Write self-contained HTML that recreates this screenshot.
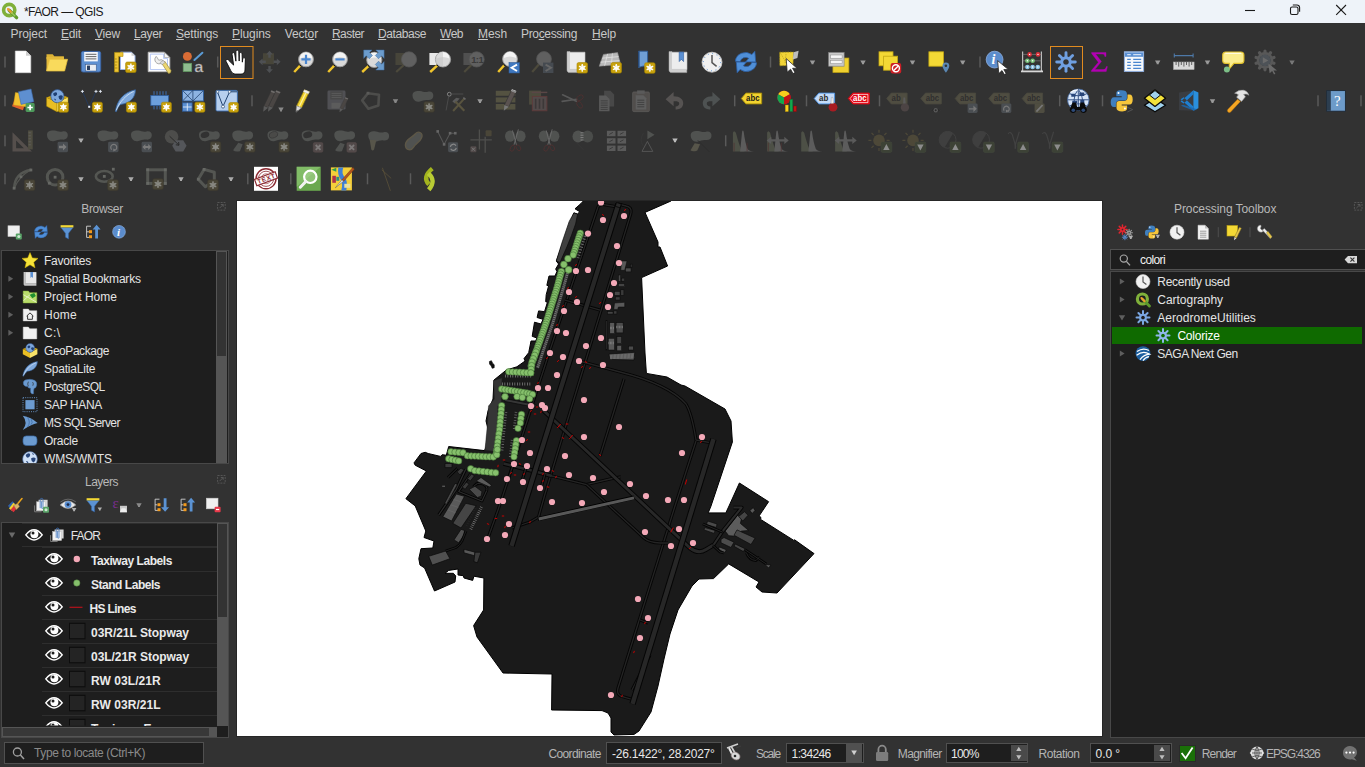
<!DOCTYPE html>
<html><head><meta charset="utf-8"><title>*FAOR — QGIS</title>
<style>
html,body{margin:0;padding:0;}
body{width:1365px;height:767px;overflow:hidden;position:relative;background:#323232;font-family:"Liberation Sans",sans-serif;font-size:12px;}
.t{position:absolute;white-space:pre;}
.b{position:absolute;box-sizing:border-box;}
svg{position:absolute;left:0;top:0;}
u{text-decoration:underline;text-underline-offset:1px;}
</style></head>
<body>
<div class="b" style="left:0px;top:0px;width:1365px;height:23px;background:#eef3f9;"></div>
<span class="t" style="left:24.0px;top:3.5px;font-size:12px;color:#1a1a1a;letter-spacing:-0.585px;line-height:16px;">*FAOR — QGIS</span>
<span class="t" style="left:10.5px;top:26px;font-size:12px;color:#c8c8c8;letter-spacing:-0.121px;line-height:16px;">Pro<u>j</u>ect</span>
<span class="t" style="left:61px;top:26px;font-size:12px;color:#c8c8c8;letter-spacing:-0.169px;line-height:16px;"><u>E</u>dit</span>
<span class="t" style="left:95px;top:26px;font-size:12px;color:#c8c8c8;letter-spacing:-0.198px;line-height:16px;"><u>V</u>iew</span>
<span class="t" style="left:134px;top:26px;font-size:12px;color:#c8c8c8;letter-spacing:-0.403px;line-height:16px;"><u>L</u>ayer</span>
<span class="t" style="left:176px;top:26px;font-size:12px;color:#c8c8c8;letter-spacing:-0.170px;line-height:16px;"><u>S</u>ettings</span>
<span class="t" style="left:232px;top:26px;font-size:12px;color:#c8c8c8;letter-spacing:-0.094px;line-height:16px;"><u>P</u>lugins</span>
<span class="t" style="left:284.7px;top:26px;font-size:12px;color:#c8c8c8;letter-spacing:-0.120px;line-height:16px;">Vect<u>o</u>r</span>
<span class="t" style="left:332px;top:26px;font-size:12px;color:#c8c8c8;letter-spacing:-0.557px;line-height:16px;"><u>R</u>aster</span>
<span class="t" style="left:378px;top:26px;font-size:12px;color:#c8c8c8;letter-spacing:-0.421px;line-height:16px;"><u>D</u>atabase</span>
<span class="t" style="left:440px;top:26px;font-size:12px;color:#c8c8c8;letter-spacing:-0.485px;line-height:16px;"><u>W</u>eb</span>
<span class="t" style="left:478px;top:26px;font-size:12px;color:#c8c8c8;letter-spacing:-0.085px;line-height:16px;"><u>M</u>esh</span>
<span class="t" style="left:521px;top:26px;font-size:12px;color:#c8c8c8;letter-spacing:-0.336px;line-height:16px;">Pro<u>c</u>essing</span>
<span class="t" style="left:592px;top:26px;font-size:12px;color:#c8c8c8;letter-spacing:-0.170px;line-height:16px;"><u>H</u>elp</span>
<div class="b" style="left:236px;top:200px;width:867px;height:537px;background:#262626;"></div>
<div class="b" style="left:237px;top:201px;width:865px;height:535px;background:#ffffff;"></div>
<span class="t" style="left:81.3px;top:200.5px;font-size:12px;color:#b8b8b8;letter-spacing:-0.358px;line-height:16px;">Browser</span>
<div class="b" style="left:1px;top:250px;width:227.5px;height:214px;background:#1e1e1e;border:1px solid #484848;"></div>
<div class="b" style="left:216px;top:251px;width:10.5px;height:212px;background:#555;"></div>
<div class="b" style="left:217px;top:252px;width:8.5px;height:104px;background:#333;"></div>
<span class="t" style="left:44.0px;top:252.5px;font-size:12px;color:#e4e4e4;letter-spacing:-0.260px;line-height:16px;">Favorites</span>
<span class="t" style="left:44.0px;top:270.5px;font-size:12px;color:#e4e4e4;letter-spacing:-0.191px;line-height:16px;">Spatial Bookmarks</span>
<span class="t" style="left:44.0px;top:288.5px;font-size:12px;color:#e4e4e4;letter-spacing:0.026px;line-height:16px;">Project Home</span>
<span class="t" style="left:44.0px;top:306.5px;font-size:12px;color:#e4e4e4;letter-spacing:0.248px;line-height:16px;">Home</span>
<span class="t" style="left:44.0px;top:324.5px;font-size:12px;color:#e4e4e4;letter-spacing:0.322px;line-height:16px;">C:\</span>
<span class="t" style="left:44.0px;top:342.5px;font-size:12px;color:#e4e4e4;letter-spacing:-0.448px;line-height:16px;">GeoPackage</span>
<span class="t" style="left:44.0px;top:360.5px;font-size:12px;color:#e4e4e4;letter-spacing:-0.207px;line-height:16px;">SpatiaLite</span>
<span class="t" style="left:44.0px;top:378.5px;font-size:12px;color:#e4e4e4;letter-spacing:-0.456px;line-height:16px;">PostgreSQL</span>
<span class="t" style="left:44.0px;top:396.5px;font-size:12px;color:#e4e4e4;letter-spacing:-0.309px;line-height:16px;">SAP HANA</span>
<span class="t" style="left:44.0px;top:414.5px;font-size:12px;color:#e4e4e4;letter-spacing:-0.598px;line-height:16px;">MS SQL Server</span>
<span class="t" style="left:44.0px;top:432.5px;font-size:12px;color:#e4e4e4;letter-spacing:-0.257px;line-height:16px;">Oracle</span>
<div class="b" style="left:2px;top:449px;width:213px;height:14px;overflow:hidden;">
<span class="t" style="left:42.0px;top:1.7px;font-size:12px;color:#e4e4e4;letter-spacing:-0.190px;line-height:16px;">WMS/WMTS</span>
</div>
<span class="t" style="left:85.0px;top:473.8px;font-size:12px;color:#b8b8b8;letter-spacing:-0.503px;line-height:16px;">Layers</span>
<div class="b" style="left:1px;top:522px;width:228px;height:216px;background:#1e1e1e;border:1px solid #484848;"></div>
<div class="b" style="left:217px;top:523px;width:10.5px;height:203px;background:#555;"></div>
<div class="b" style="left:218px;top:524px;width:8.5px;height:93px;background:#333;"></div>
<div class="b" style="left:2px;top:726.5px;width:215px;height:10px;background:#555;"></div>
<div class="b" style="left:3px;top:727.5px;width:206px;height:8px;background:#383838;"></div>
<div class="b" style="left:217px;top:726px;width:10.5px;height:11px;background:#1e1e1e;"></div>
<div class="b" style="left:22px;top:523px;width:195px;height:1px;background:#2e2e2e;"></div>
<div class="b" style="left:22px;top:546px;width:195px;height:1px;background:#2e2e2e;"></div>
<div class="b" style="left:42px;top:547px;width:175px;height:1px;background:#2e2e2e;"></div>
<div class="b" style="left:42px;top:570.6px;width:175px;height:1.4px;background:#2e2e2e;"></div>
<div class="b" style="left:42px;top:594.6px;width:175px;height:1.4px;background:#2e2e2e;"></div>
<div class="b" style="left:42px;top:618.6px;width:175px;height:1.4px;background:#2e2e2e;"></div>
<div class="b" style="left:42px;top:642.6px;width:175px;height:1.4px;background:#2e2e2e;"></div>
<div class="b" style="left:42px;top:666.6px;width:175px;height:1.4px;background:#2e2e2e;"></div>
<div class="b" style="left:42px;top:690.6px;width:175px;height:1.4px;background:#2e2e2e;"></div>
<div class="b" style="left:42px;top:714.6px;width:175px;height:1.4px;background:#2e2e2e;"></div>
<span class="t" style="left:70.8px;top:528.2px;font-size:12px;color:#e4e4e4;letter-spacing:-0.868px;line-height:16px;">FAOR</span>
<span class="t" style="left:91.0px;top:552.7px;font-size:12px;color:#eaeaea;letter-spacing:-0.446px;line-height:16px;font-weight:bold;">Taxiway Labels</span>
<span class="t" style="left:91.0px;top:576.7px;font-size:12px;color:#eaeaea;letter-spacing:-0.473px;line-height:16px;font-weight:bold;">Stand Labels</span>
<span class="t" style="left:89.4px;top:600.7px;font-size:12px;color:#eaeaea;letter-spacing:-0.605px;line-height:16px;font-weight:bold;">HS Lines</span>
<span class="t" style="left:91.0px;top:624.7px;font-size:12px;color:#eaeaea;letter-spacing:-0.032px;line-height:16px;font-weight:bold;">03R/21L Stopway</span>
<span class="t" style="left:91.0px;top:648.7px;font-size:12px;color:#eaeaea;letter-spacing:-0.046px;line-height:16px;font-weight:bold;">03L/21R Stopway</span>
<span class="t" style="left:91.0px;top:672.7px;font-size:12px;color:#eaeaea;letter-spacing:0.057px;line-height:16px;font-weight:bold;">RW 03L/21R</span>
<span class="t" style="left:91.0px;top:696.7px;font-size:12px;color:#eaeaea;letter-spacing:0.057px;line-height:16px;font-weight:bold;">RW 03R/21L</span>
<div class="b" style="left:2px;top:716px;width:215px;height:9.5px;overflow:hidden;">
<span class="t" style="left:89.0px;top:4.9px;font-size:12px;color:#eaeaea;letter-spacing:0.429px;line-height:16px;font-weight:bold;">Taxiway E</span>
</div>
<div class="b" style="left:0px;top:738px;width:1365px;height:29px;background:#323232;"></div>
<div class="b" style="left:4px;top:742px;width:200px;height:22px;background:#1e1e1e;border:1px solid #505050;"></div>
<span class="t" style="left:34.0px;top:745.3px;font-size:12px;color:#8a8a8a;letter-spacing:-0.379px;line-height:16px;">Type to locate (Ctrl+K)</span>
<span class="t" style="left:548.5px;top:745.5px;font-size:12px;color:#b4b4b4;letter-spacing:-0.640px;line-height:16px;">Coordinate</span>
<div class="b" style="left:606px;top:742px;width:116px;height:22px;background:#1e1e1e;border:1px solid #505050;"></div>
<span class="t" style="left:612.0px;top:745.5px;font-size:12px;color:#e8e8e8;letter-spacing:-0.232px;line-height:16px;">-26.1422°, 28.2027°</span>
<span class="t" style="left:756.0px;top:745.5px;font-size:12px;color:#b4b4b4;letter-spacing:-1.203px;line-height:16px;">Scale</span>
<div class="b" style="left:786px;top:742.5px;width:77.5px;height:20.5px;background:#1e1e1e;border:1px solid #505050;"></div>
<div class="b" style="left:846px;top:743.5px;width:16px;height:18.5px;background:#505050;"></div>
<span class="t" style="left:791.6px;top:745.5px;font-size:12px;color:#e8e8e8;letter-spacing:-0.625px;line-height:16px;">1:34246</span>
<span class="t" style="left:897.8px;top:745.5px;font-size:12px;color:#b4b4b4;letter-spacing:-0.617px;line-height:16px;">Magnifier</span>
<div class="b" style="left:946px;top:743px;width:82px;height:19.5px;background:#1e1e1e;border:1px solid #505050;"></div>
<div class="b" style="left:1011px;top:745px;width:16px;height:15.5px;background:#4a4a4a;"></div>
<span class="t" style="left:951.0px;top:745.5px;font-size:12px;color:#e8e8e8;letter-spacing:-0.747px;line-height:16px;">100%</span>
<span class="t" style="left:1038.6px;top:745.5px;font-size:12px;color:#b4b4b4;letter-spacing:-0.474px;line-height:16px;">Rotation</span>
<div class="b" style="left:1090px;top:743px;width:82px;height:19.5px;background:#1e1e1e;border:1px solid #505050;"></div>
<div class="b" style="left:1154px;top:745px;width:16px;height:15.5px;background:#4a4a4a;"></div>
<span class="t" style="left:1095.6px;top:745.5px;font-size:12px;color:#e8e8e8;letter-spacing:-0.082px;line-height:16px;">0.0 °</span>
<div class="b" style="left:1178.5px;top:744.5px;width:17.5px;height:17.5px;background:#1a7008;border:1px solid #2a2a2a;"></div>
<span class="t" style="left:1201.8px;top:745.5px;font-size:12px;color:#b4b4b4;letter-spacing:-0.859px;line-height:16px;">Render</span>
<span class="t" style="left:1266.0px;top:745.5px;font-size:12px;color:#b4b4b4;letter-spacing:-1.075px;line-height:16px;">EPSG:4326</span>
<span class="t" style="left:1174.0px;top:200.5px;font-size:12px;color:#b8b8b8;letter-spacing:-0.085px;line-height:16px;">Processing Toolbox</span>
<div class="b" style="left:1110px;top:248.5px;width:255px;height:21.5px;background:#1e1e1e;border:1px solid #505050;border-right:none;"></div>
<span class="t" style="left:1140.0px;top:251.7px;font-size:12px;color:#f0f0f0;letter-spacing:-0.612px;line-height:16px;">colori</span>
<div class="b" style="left:1110px;top:271px;width:255px;height:467px;background:#1e1e1e;border-left:1px solid #484848;border-top:1px solid #484848;border-bottom:1px solid #484848;"></div>
<div class="b" style="left:1112px;top:326.5px;width:250px;height:17.5px;background:#0f6a00;"></div>
<span class="t" style="left:1157.3px;top:273.6px;font-size:12px;color:#e4e4e4;letter-spacing:-0.288px;line-height:16px;">Recently used</span>
<span class="t" style="left:1157.3px;top:291.6px;font-size:12px;color:#e4e4e4;letter-spacing:-0.030px;line-height:16px;">Cartography</span>
<span class="t" style="left:1157.3px;top:309.6px;font-size:12px;color:#e4e4e4;letter-spacing:0.032px;line-height:16px;">AerodromeUtilities</span>
<span class="t" style="left:1177.4px;top:327.5px;font-size:12px;color:#ffffff;letter-spacing:-0.214px;line-height:16px;">Colorize</span>
<span class="t" style="left:1157.3px;top:345.6px;font-size:12px;color:#e4e4e4;letter-spacing:-0.493px;line-height:16px;">SAGA Next Gen</span>
<svg width="1365" height="767" viewBox="0 0 1365 767"><defs><clipPath id="cv"><rect x="237" y="201" width="865" height="535"/></clipPath></defs><g clip-path="url(#cv)"><polygon points="584.2,200.0 672.0,200.0 671.0,201.0 645.0,212.4 658.0,242.0 658.0,247.0 660.0,247.0 667.6,266.0 641.6,277.6 645.0,353.0 646.4,373.4 667.0,377.0 681.0,385.0 685.0,386.0 725.0,409.0 731.0,421.0 732.4,442.0 711.0,506.0 708.2,512.9 725.8,512.9 729.0,506.0 739.4,483.0 768.6,501.7 759.2,515.8 761.0,517.6 760.6,519.4 793.8,540.4 794.6,539.8 814.0,553.6 777.0,593.0 762.0,592.0 756.0,587.0 759.0,582.0 728.7,563.9 713.5,578.6 699.0,579.0 692.0,586.0 678.0,610.0 670.0,634.0 664.0,659.0 658.0,686.0 651.0,712.0 639.0,731.0 634.0,734.4 614.0,735.0 611.0,732.0 611.0,718.0 608.0,713.0 602.0,710.6 551.6,710.0 552.0,674.0 503.0,673.0 477.0,637.0 473.6,625.6 483.6,610.0 483.9,578.0 473.9,576.2 472.7,580.4 464.0,578.0 463.3,575.7 458.0,575.0 458.0,569.0 448.7,570.4 445.0,573.3 453.4,573.3 455.7,576.0 455.0,582.0 434.5,591.0 424.6,568.0 420.0,565.0 418.8,558.7 421.0,548.7 432.8,548.0 434.0,541.0 424.0,537.5 425.8,531.0 415.2,505.9 405.9,498.7 426.4,471.0 415.2,465.2 414.0,462.9 421.0,453.5 425.2,452.3 428.2,453.5 440.5,456.4 442.2,454.7 446.3,455.2 448.7,446.5 484.5,450.6 486.0,447.0 488.0,429.0 486.0,421.0 488.0,411.0 493.0,399.0 494.0,380.0 506.4,370.0 516.9,366.8 525.1,361.0 524.0,358.6 528.7,352.7 531.0,341.0 535.7,341.0 536.9,338.0 532.2,336.3 534.5,322.2 541.0,324.0 543.0,319.3 537.1,317.5 538.6,310.9 544.5,311.7 547.4,302.3 545.7,301.7 546.2,294.7 548.6,285.9 546.8,285.3 547.0,284.5 549.0,276.0 555.0,276.0 556.9,271.5 555.7,269.0 558.6,264.0 556.3,261.0 573.9,212.9 577.4,214.0 579.8,211.7 575.0,208.8 581.0,203.5" fill="#1a1a1a" stroke="#000" stroke-width="1" stroke-linejoin="round"/><path d="M489.4 361.5 l2 -0.8 l1.2 2.5 l1.6 1.5 l0 3 l-2 0.6 l-1.2 -2.8 l-1.4 -1.2z" fill="#111" stroke="#000" stroke-width="0.6"/><path d="M598 207 L549 353 L508 480 L498 510 L488 538" fill="none" stroke="#050505" stroke-width="3.1" stroke-linejoin="round"/><path d="M598 207 L549 353 L508 480 L498 510 L488 538" fill="none" stroke="#242424" stroke-width="1.3" stroke-linejoin="round"/><path d="M631 213 L588 353 L545 494 L538.5 517 L530 522 L512 528" fill="none" stroke="#050505" stroke-width="3.1" stroke-linejoin="round"/><path d="M631 213 L588 353 L545 494 L538.5 517 L530 522 L512 528" fill="none" stroke="#242424" stroke-width="1.3" stroke-linejoin="round"/><path d="M631 213 Q632 207 626 206 L618 204" fill="none" stroke="#050505" stroke-width="3.1" stroke-linejoin="round"/><path d="M631 213 Q632 207 626 206 L618 204" fill="none" stroke="#242424" stroke-width="1.3" stroke-linejoin="round"/><path d="M598 207 Q600 203 606 205 L618 207" fill="none" stroke="#050505" stroke-width="3.1" stroke-linejoin="round"/><path d="M598 207 Q600 203 606 205 L618 207" fill="none" stroke="#242424" stroke-width="1.3" stroke-linejoin="round"/><path d="M579 361 L620 372 Q668 384 686 404 Q692 414 696 440 L712 443" fill="none" stroke="#050505" stroke-width="3.1" stroke-linejoin="round"/><path d="M579 361 L620 372 Q668 384 686 404 Q692 414 696 440 L712 443" fill="none" stroke="#242424" stroke-width="1.3" stroke-linejoin="round"/><path d="M624 379 L600 456" fill="none" stroke="#050505" stroke-width="3.1" stroke-linejoin="round"/><path d="M624 379 L600 456" fill="none" stroke="#242424" stroke-width="1.3" stroke-linejoin="round"/><path d="M696 441 L675 506 L627 659 L618 688 Q616 696 624 697 L631 699" fill="none" stroke="#050505" stroke-width="3.1" stroke-linejoin="round"/><path d="M696 441 L675 506 L627 659 L618 688 Q616 696 624 697 L631 699" fill="none" stroke="#242424" stroke-width="1.3" stroke-linejoin="round"/><path d="M552 476 L586.4 484.6 L610 479 L620.8 476.8" fill="none" stroke="#050505" stroke-width="3.1" stroke-linejoin="round"/><path d="M552 476 L586.4 484.6 L610 479 L620.8 476.8" fill="none" stroke="#242424" stroke-width="1.3" stroke-linejoin="round"/><path d="M565 300 L600 310" fill="none" stroke="#050505" stroke-width="3.1" stroke-linejoin="round"/><path d="M565 300 L600 310" fill="none" stroke="#242424" stroke-width="1.3" stroke-linejoin="round"/><path d="M586.4 484.6 L644 538 Q649 542.5 660 543 L668 543" fill="none" stroke="#050505" stroke-width="3.1" stroke-linejoin="round"/><path d="M586.4 484.6 L644 538 Q649 542.5 660 543 L668 543" fill="none" stroke="#242424" stroke-width="1.3" stroke-linejoin="round"/><path d="M648 623 L640 620 M650 655 L632 690" fill="none" stroke="#050505" stroke-width="3.1" stroke-linejoin="round"/><path d="M648 623 L640 620 M650 655 L632 690" fill="none" stroke="#242424" stroke-width="1.3" stroke-linejoin="round"/><path d="M503.5 463.5 L531.6 470.5 L552 476" fill="none" stroke="#050505" stroke-width="4.4" stroke-linejoin="round"/><path d="M503.5 463.5 L531.6 470.5 L552 476" fill="none" stroke="#262626" stroke-width="2.6" stroke-linejoin="round"/><path d="M513 465 L508 480 M526 468 L521 484 M545 474 L541 488" fill="none" stroke="#050505" stroke-width="3.0" stroke-linejoin="round"/><path d="M513 465 L508 480 M526 468 L521 484 M545 474 L541 488" fill="none" stroke="#242424" stroke-width="1.2" stroke-linejoin="round"/><path d="M542.5 409.5 L690 548 Q698.5 554.5 706 549.5 L713.5 545" fill="none" stroke="#050505" stroke-width="4.8" stroke-linejoin="round"/><path d="M542.5 409.5 L690 548 Q698.5 554.5 706 549.5 L713.5 545" fill="none" stroke="#282828" stroke-width="3.0" stroke-linejoin="round"/><line x1="618.5" y1="204" x2="511.5" y2="546" stroke="#050505" stroke-width="6.4"/><line x1="618.5" y1="204" x2="511.5" y2="546" stroke="#272727" stroke-width="4.4"/><line x1="713.5" y1="439" x2="632.5" y2="704" stroke="#050505" stroke-width="6.4"/><line x1="713.5" y1="439" x2="632.5" y2="704" stroke="#272727" stroke-width="4.4"/><rect x="0" y="0" width="5" height="4" fill="#2a2a2a" stroke="#000" stroke-width="0.6" transform="translate(616.5,202.5) rotate(17)"/><line x1="538" y1="519" x2="634" y2="497.5" stroke="#000" stroke-width="4.2"/><line x1="538.7" y1="519" x2="634" y2="497.9" stroke="#585858" stroke-width="3"/><polygon points="573.9,212.9 577.6,214.2 575.6,224.0 571.6,235.2 566.9,247.0 560.0,262.4 556.3,261.0 562.2,242.0 569.2,221.5" fill="#404040" stroke="#0a0a0a" stroke-width="0.7"/><path d="M567.5 273 L562.5 291 L552.5 324 L544.5 347 L537.5 368" fill="none" stroke="#3a3a3a" stroke-width="3.2"/><path d="M567.5 273 L562.5 291 L552.5 324 L544.5 347 L537.5 368" fill="none" stroke="#7a7a7a" stroke-width="2.6" stroke-dasharray="0.9 1.1"/><path d="M585 236 l-7 22" fill="none" stroke="#777" stroke-width="3" stroke-dasharray="0.8 2"/><polygon points="505.0,398.6 536.0,404.6 535.4,407.4 504.6,401.4" fill="#363636" stroke="#0a0a0a" stroke-width="0.7"/><polygon points="493.6,380.5 502.0,378.0 501.2,404.2 497.8,406.0 497.0,451.7 485.0,450.0 487.6,422.9 488.5,406.0 494.4,399.0" fill="#363636" stroke="#222" stroke-width="0.5"/><path d="M505 376 h26 M502 384 h30" stroke="#888" stroke-width="3" stroke-dasharray="0.7 1.8" fill="none"/><path d="M506 412 L502 452 M512 440 L510 458 M516 412 L514 430" stroke="#777" stroke-width="2.5" stroke-dasharray="0.7 2" fill="none"/><path d="M465.700 469.300 L456.300 489.300 L438.700 515" fill="none" stroke="#050505" stroke-width="3.1" stroke-linejoin="round"/><path d="M465.700 469.300 L456.300 489.300 L438.700 515" fill="none" stroke="#2c2c2c" stroke-width="1.3" stroke-linejoin="round"/><path d="M470.400 474 L458.700 491.600 L482 501 L486.800 490.400" fill="none" stroke="#050505" stroke-width="2.9000000000000004" stroke-linejoin="round"/><path d="M470.400 474 L458.700 491.600 L482 501 L486.800 490.400" fill="none" stroke="#2c2c2c" stroke-width="1.1" stroke-linejoin="round"/><path d="M457.500 468.200 L448 477.500" fill="none" stroke="#050505" stroke-width="2.8" stroke-linejoin="round"/><path d="M457.500 468.200 L448 477.500" fill="none" stroke="#2c2c2c" stroke-width="1.0" stroke-linejoin="round"/><path d="M473.500 487 Q477 481.500 483 484 Q488 486.500 486.800 490.400" fill="none" stroke="#050505" stroke-width="2.8" stroke-linejoin="round"/><path d="M473.500 487 Q477 481.500 483 484 Q488 486.500 486.800 490.400" fill="none" stroke="#2c2c2c" stroke-width="1.0" stroke-linejoin="round"/><polygon points="445.0,463.5 452.0,463.5 452.0,467.6 445.0,467.6" fill="#3c3c3c" stroke="#0a0a0a" stroke-width="0.7"/><polygon points="457.0,471.7 461.0,468.0 464.0,470.0 460.0,475.0" fill="#3a3a3a" stroke="#0a0a0a" stroke-width="0.7"/><polygon points="467.4,478.7 471.5,474.0 474.5,475.8 470.4,481.0" fill="#3a3a3a" stroke="#0a0a0a" stroke-width="0.7"/><polygon points="462.2,487.0 466.3,482.2 469.2,484.0 465.1,489.3" fill="#3a3a3a" stroke="#0a0a0a" stroke-width="0.7"/><polygon points="455.0,483.4 457.4,484.4 446.6,504.4 444.6,503.3" fill="#4a4a4a" stroke="#0a0a0a" stroke-width="0.7"/><polygon points="456.3,494.0 464.5,496.3 451.6,521.0 442.8,516.8" fill="#5a5a5a" stroke="#0a0a0a" stroke-width="0.7"/><path d="M453.6 499.5 l7.600 2.400 M450.800 504.800 l7.600 2.600 M448 510 l7.600 2.800" stroke="#6a6a6a" stroke-width="0.600"/><polygon points="465.7,503.3 476.2,505.7 461.0,528.0 452.8,523.3" fill="#454545" stroke="#0a0a0a" stroke-width="0.7"/><polygon points="469.2,489.3 475.0,486.3 482.0,491.6 481.0,496.3 477.4,497.5" fill="#4a4a4a" stroke="#0a0a0a" stroke-width="0.7"/><polygon points="476.2,481.0 481.0,477.5 491.5,485.2 489.7,487.0" fill="#5a5a5a" stroke="#0a0a0a" stroke-width="0.7"/><path d="M481.500 507 L470.400 530" stroke="#777" stroke-width="3" stroke-dasharray="0.700 1.300" fill="none"/><path d="M475.500 508 L466 527" stroke="#222" stroke-width="2.400" stroke-dasharray="1 1.400" fill="none"/><polygon points="428.7,556.3 445.7,551.0 449.9,558.7 432.3,565.1" fill="#505050" stroke="#0a0a0a" stroke-width="0.7"/><polygon points="454.0,539.9 461.0,529.3 464.5,530.5 464.0,535.2 458.7,542.8" fill="#505050" stroke="#0a0a0a" stroke-width="0.7"/><polygon points="464.0,549.3 475.0,552.2 474.5,555.7 464.0,552.8" fill="#585858" stroke="#0a0a0a" stroke-width="0.7"/><polygon points="475.0,552.2 481.0,552.2 477.4,562.8 473.9,561.6" fill="#3a3a3a" stroke="#0a0a0a" stroke-width="0.7"/><path d="M445.700 551 L456 547.500 Q460 545 462 541 L466 531" fill="none" stroke="#050505" stroke-width="2.7" stroke-linejoin="round"/><path d="M445.700 551 L456 547.500 Q460 545 462 541 L466 531" fill="none" stroke="#242424" stroke-width="0.9" stroke-linejoin="round"/><rect x="442.200" y="485.600" width="2.800" height="1.400" fill="#555"/><polygon points="725.2,531.1 737.5,515.2 741.6,518.2 740.4,523.4 748.7,530.5 741.6,531.1 736.3,536.3 728.7,535.7" fill="#5c5c5c" stroke="#0a0a0a" stroke-width="0.7"/><polygon points="738.7,516.4 744.5,511.7 748.1,515.2 742.8,521.1" fill="#454545" stroke="#0a0a0a" stroke-width="0.7"/><polygon points="737.0,529.9 755.1,538.1 751.0,544.5 734.0,535.2" fill="#484848" stroke="#0a0a0a" stroke-width="0.7"/><polygon points="749.8,510.5 753.3,507.6 755.0,510.5 752.2,513.5" fill="#585858" stroke="#0a0a0a" stroke-width="0.7"/><polygon points="707.6,521.0 717.0,524.0 716.4,527.5 706.4,524.6" fill="#4a4a4a" stroke="#0a0a0a" stroke-width="0.7"/><polygon points="704.7,527.5 715.2,530.5 714.0,533.4 704.0,529.9" fill="#4a4a4a" stroke="#0a0a0a" stroke-width="0.7"/><polygon points="721.0,539.3 724.0,537.5 734.0,542.2 731.0,547.5 721.0,542.8" fill="#4c4c4c" stroke="#0a0a0a" stroke-width="0.7"/><polygon points="735.2,544.0 745.1,548.7 743.4,551.6 734.0,546.3" fill="#454545" stroke="#0a0a0a" stroke-width="0.7"/><polygon points="719.3,546.9 726.4,549.8 724.6,552.8 718.7,549.2" fill="#585858" stroke="#0a0a0a" stroke-width="0.7"/><path d="M713.500 545 L722.800 531 L741.600 507.600 L733.400 507.600" fill="none" stroke="#050505" stroke-width="3.8" stroke-linejoin="round"/><path d="M713.500 545 L722.800 531 L741.600 507.600 L733.400 507.600" fill="none" stroke="#2a2a2a" stroke-width="2.0" stroke-linejoin="round"/><path d="M702.900 524 L722.800 532.200" fill="none" stroke="#050505" stroke-width="2.8" stroke-linejoin="round"/><path d="M702.900 524 L722.800 532.200" fill="none" stroke="#242424" stroke-width="1.0" stroke-linejoin="round"/><path d="M745.100 549.800 L766.200 563.900 M746.500 553 Q749 560 756 560.500 L759.500 557" fill="none" stroke="#050505" stroke-width="2.8" stroke-linejoin="round"/><path d="M745.100 549.800 L766.200 563.900 M746.500 553 Q749 560 756 560.500 L759.500 557" fill="none" stroke="#242424" stroke-width="1.0" stroke-linejoin="round"/><path d="M713 545.500 L720 552 L724 553" fill="none" stroke="#050505" stroke-width="2.8" stroke-linejoin="round"/><path d="M713 545.500 L720 552 L724 553" fill="none" stroke="#242424" stroke-width="1.0" stroke-linejoin="round"/><polygon points="765.0,564.4 771.0,565.0 768.6,568.0" fill="#5a5a5a" stroke="#0a0a0a" stroke-width="0.7"/><polygon points="621.6,261 627,261 624.7,270.3 620.8,270.3" fill="#585858" stroke="#0a0a0a" stroke-width="0.5"/><rect x="625.5" y="268.0" width="5.5" height="3.9" fill="#4a4a4a" stroke="#0a0a0a" stroke-width="0.5"/><rect x="630.2" y="264.1" width="2.3" height="3.1" fill="#2c2c2c" stroke="#0a0a0a" stroke-width="0.5"/><rect x="618.4" y="275.0" width="2.3" height="6.2" fill="#484848" stroke="#0a0a0a" stroke-width="0.5"/><rect x="621.6" y="278.1" width="3.1" height="3.1" fill="#3c3c3c" stroke="#0a0a0a" stroke-width="0.5"/><rect x="618.4" y="283.6" width="6.2" height="3.1" fill="#444" stroke="#0a0a0a" stroke-width="0.5"/><rect x="614.5" y="291.4" width="5.5" height="3.9" fill="#484848" stroke="#0a0a0a" stroke-width="0.5"/><rect x="620.8" y="289.8" width="3.1" height="5.5" fill="#3a3a3a" stroke="#0a0a0a" stroke-width="0.5"/><rect x="615.3" y="296.9" width="4.7" height="3.1" fill="#3c3c3c" stroke="#0a0a0a" stroke-width="0.5"/><polygon points="614.5,303 624.7,302.3 624.7,307 618.4,307 617.7,309.4 613.8,309.4" fill="#5a5a5a" stroke="#0a0a0a" stroke-width="0.5"/><rect x="607.5" y="311.7" width="5.5" height="2.3" fill="#444" stroke="#0a0a0a" stroke-width="0.5"/><rect x="613.8" y="310.9" width="3.1" height="3.1" fill="#3c3c3c" stroke="#0a0a0a" stroke-width="0.5"/><rect x="605.9" y="320.3" width="1.6" height="29.7" fill="#2a2a2a" stroke="#0a0a0a" stroke-width="0.5"/><rect x="609.8" y="322.7" width="4.7" height="10.9" fill="#5a5a5a" stroke="#0a0a0a" stroke-width="0.5"/><rect x="616.1" y="322.7" width="7.0" height="10.2" fill="#4c4c4c" stroke="#0a0a0a" stroke-width="0.5"/><rect x="608.3" y="338.3" width="6.2" height="11.7" fill="#5a5a5a" stroke="#0a0a0a" stroke-width="0.5"/><rect x="616.9" y="336.7" width="4.7" height="7.0" fill="#444" stroke="#0a0a0a" stroke-width="0.5"/><rect x="616.9" y="345.3" width="4.7" height="5.5" fill="#5a5a5a" stroke="#0a0a0a" stroke-width="0.5"/><rect x="628.6" y="346.1" width="4.7" height="3.9" fill="#4a4a4a" stroke="#0a0a0a" stroke-width="0.5"/><path d="M610 328 h4.400 M616.200 327 h6.600 M608.600 343 h5.800" stroke="#8a8a8a" stroke-width="2.400" stroke-dasharray="0.600 0.900" fill="none"/><polygon points="609.0,354.0 634.8,352.3 634.0,360.0 609.8,359.4" fill="#5a5a5a" stroke="#0a0a0a" stroke-width="0.7"/><path d="M610 357 L634 355.800" stroke="#7a7a7a" stroke-width="4.500" stroke-dasharray="0.500 0.900" fill="none"/><line x1="602.0" y1="214.4" x2="604.0" y2="215.6" stroke="#c80000" stroke-width="1"/><line x1="624.4" y1="211.0" x2="625.6" y2="209.0" stroke="#c80000" stroke-width="1"/><line x1="575.4" y1="266.0" x2="576.6" y2="264.0" stroke="#c80000" stroke-width="1"/><line x1="567.4" y1="289.0" x2="568.6" y2="287.0" stroke="#c80000" stroke-width="1"/><line x1="575.4" y1="298.0" x2="576.6" y2="296.0" stroke="#c80000" stroke-width="1"/><line x1="599.4" y1="304.0" x2="600.6" y2="302.0" stroke="#c80000" stroke-width="1"/><line x1="562.4" y1="307.0" x2="563.6" y2="305.0" stroke="#c80000" stroke-width="1"/><line x1="556.6" y1="326.1" x2="557.4" y2="323.9" stroke="#c80000" stroke-width="1"/><line x1="537.6" y1="384.1" x2="538.4" y2="381.9" stroke="#c80000" stroke-width="1"/><line x1="546.4" y1="359.0" x2="547.6" y2="357.0" stroke="#c80000" stroke-width="1"/><line x1="557.2" y1="361.9" x2="558.8" y2="360.1" stroke="#c80000" stroke-width="1"/><line x1="584.9" y1="361.6" x2="587.1" y2="362.4" stroke="#c80000" stroke-width="1"/><line x1="581.4" y1="368.0" x2="582.6" y2="366.0" stroke="#c80000" stroke-width="1"/><line x1="589.4" y1="369.0" x2="590.6" y2="367.0" stroke="#c80000" stroke-width="1"/><line x1="530.4" y1="412.0" x2="531.6" y2="410.0" stroke="#c80000" stroke-width="1"/><line x1="535.8" y1="407.0" x2="538.2" y2="407.0" stroke="#c80000" stroke-width="1"/><line x1="540.6" y1="413.1" x2="541.4" y2="410.9" stroke="#c80000" stroke-width="1"/><line x1="533.8" y1="414.0" x2="536.2" y2="414.0" stroke="#c80000" stroke-width="1"/><line x1="527.8" y1="432.0" x2="530.2" y2="432.0" stroke="#c80000" stroke-width="1"/><line x1="526.4" y1="441.0" x2="527.6" y2="439.0" stroke="#c80000" stroke-width="1"/><line x1="557.3" y1="428.0" x2="560.7" y2="424.0" stroke="#c80000" stroke-width="1"/><line x1="565.8" y1="424.0" x2="568.2" y2="424.0" stroke="#c80000" stroke-width="1"/><line x1="561.9" y1="437.6" x2="564.1" y2="438.4" stroke="#c80000" stroke-width="1"/><line x1="569.3" y1="439.0" x2="572.7" y2="435.0" stroke="#c80000" stroke-width="1"/><line x1="599.0" y1="454.4" x2="601.0" y2="455.6" stroke="#c80000" stroke-width="1"/><line x1="502.8" y1="460.0" x2="505.2" y2="460.0" stroke="#c80000" stroke-width="1"/><line x1="497.8" y1="467.2" x2="498.2" y2="464.8" stroke="#c80000" stroke-width="1"/><line x1="518.9" y1="463.6" x2="521.1" y2="464.4" stroke="#c80000" stroke-width="1"/><line x1="513.8" y1="475.0" x2="516.2" y2="475.0" stroke="#c80000" stroke-width="1"/><line x1="510.4" y1="474.0" x2="511.6" y2="472.0" stroke="#c80000" stroke-width="1"/><line x1="523.6" y1="475.1" x2="524.4" y2="472.9" stroke="#c80000" stroke-width="1"/><line x1="542.6" y1="475.1" x2="543.4" y2="472.9" stroke="#c80000" stroke-width="1"/><line x1="551.9" y1="470.6" x2="554.1" y2="471.4" stroke="#c80000" stroke-width="1"/><line x1="542.6" y1="482.1" x2="543.4" y2="479.9" stroke="#c80000" stroke-width="1"/><line x1="546.8" y1="486.8" x2="549.2" y2="487.2" stroke="#c80000" stroke-width="1"/><line x1="555.6" y1="478.1" x2="556.4" y2="475.9" stroke="#c80000" stroke-width="1"/><line x1="486.9" y1="523.6" x2="489.1" y2="524.4" stroke="#c80000" stroke-width="1"/><line x1="494.8" y1="518.7" x2="497.2" y2="518.3" stroke="#c80000" stroke-width="1"/><line x1="501.8" y1="516.0" x2="504.2" y2="516.0" stroke="#c80000" stroke-width="1"/><line x1="504.6" y1="528.1" x2="505.4" y2="525.9" stroke="#c80000" stroke-width="1"/><line x1="529.6" y1="523.1" x2="530.4" y2="520.9" stroke="#c80000" stroke-width="1"/><line x1="670.7" y1="532.3" x2="673.3" y2="527.7" stroke="#c80000" stroke-width="1"/><line x1="689.2" y1="548.9" x2="690.8" y2="547.1" stroke="#c80000" stroke-width="1"/><line x1="644.6" y1="624.1" x2="645.4" y2="621.9" stroke="#c80000" stroke-width="1"/><line x1="633.6" y1="653.1" x2="634.4" y2="650.9" stroke="#c80000" stroke-width="1"/><line x1="621.6" y1="697.1" x2="622.4" y2="694.9" stroke="#c80000" stroke-width="1"/><line x1="700.4" y1="443.0" x2="701.6" y2="441.0" stroke="#c80000" stroke-width="1"/><line x1="685.3" y1="484.5" x2="686.7" y2="479.5" stroke="#c80000" stroke-width="1"/><circle cx="580.3" cy="233.2" r="3.2" fill="#86c06c" stroke="#3f6e32" stroke-width="0.6"/><circle cx="579.5" cy="235.6" r="3.2" fill="#86c06c" stroke="#3f6e32" stroke-width="0.6"/><circle cx="578.7" cy="238.0" r="3.2" fill="#86c06c" stroke="#3f6e32" stroke-width="0.6"/><circle cx="577.9" cy="240.5" r="3.2" fill="#86c06c" stroke="#3f6e32" stroke-width="0.6"/><circle cx="577.1" cy="242.9" r="3.2" fill="#86c06c" stroke="#3f6e32" stroke-width="0.6"/><circle cx="576.4" cy="245.3" r="3.2" fill="#86c06c" stroke="#3f6e32" stroke-width="0.6"/><circle cx="575.6" cy="247.7" r="3.2" fill="#86c06c" stroke="#3f6e32" stroke-width="0.6"/><circle cx="574.8" cy="250.2" r="3.2" fill="#86c06c" stroke="#3f6e32" stroke-width="0.6"/><circle cx="574.0" cy="252.6" r="3.2" fill="#86c06c" stroke="#3f6e32" stroke-width="0.6"/><circle cx="573.2" cy="255.0" r="3.2" fill="#86c06c" stroke="#3f6e32" stroke-width="0.6"/><circle cx="568.0" cy="258.7" r="3.4" fill="#86c06c" stroke="#3f6e32" stroke-width="0.6"/><circle cx="563.9" cy="264.5" r="3.4" fill="#86c06c" stroke="#3f6e32" stroke-width="0.6"/><circle cx="568.6" cy="269.8" r="3.4" fill="#86c06c" stroke="#3f6e32" stroke-width="0.6"/><circle cx="568.6" cy="269.8" r="3.4" fill="#86c06c" stroke="#3f6e32" stroke-width="0.6"/><circle cx="561.4" cy="271.5" r="3.2" fill="#86c06c" stroke="#3f6e32" stroke-width="0.6"/><circle cx="560.7" cy="274.0" r="3.2" fill="#86c06c" stroke="#3f6e32" stroke-width="0.6"/><circle cx="560.0" cy="276.5" r="3.2" fill="#86c06c" stroke="#3f6e32" stroke-width="0.6"/><circle cx="559.3" cy="279.0" r="3.2" fill="#86c06c" stroke="#3f6e32" stroke-width="0.6"/><circle cx="558.7" cy="281.5" r="3.2" fill="#86c06c" stroke="#3f6e32" stroke-width="0.6"/><circle cx="558.0" cy="284.0" r="3.2" fill="#86c06c" stroke="#3f6e32" stroke-width="0.6"/><circle cx="557.3" cy="286.5" r="3.2" fill="#86c06c" stroke="#3f6e32" stroke-width="0.6"/><circle cx="556.6" cy="289.0" r="3.2" fill="#86c06c" stroke="#3f6e32" stroke-width="0.6"/><circle cx="555.9" cy="291.4" r="3.2" fill="#86c06c" stroke="#3f6e32" stroke-width="0.6"/><circle cx="555.1" cy="293.7" r="3.2" fill="#86c06c" stroke="#3f6e32" stroke-width="0.6"/><circle cx="554.4" cy="296.1" r="3.2" fill="#86c06c" stroke="#3f6e32" stroke-width="0.6"/><circle cx="553.7" cy="298.4" r="3.2" fill="#86c06c" stroke="#3f6e32" stroke-width="0.6"/><circle cx="553.0" cy="300.8" r="3.2" fill="#86c06c" stroke="#3f6e32" stroke-width="0.6"/><circle cx="552.2" cy="303.1" r="3.2" fill="#86c06c" stroke="#3f6e32" stroke-width="0.6"/><circle cx="551.5" cy="305.5" r="3.2" fill="#86c06c" stroke="#3f6e32" stroke-width="0.6"/><circle cx="550.8" cy="307.9" r="3.2" fill="#86c06c" stroke="#3f6e32" stroke-width="0.6"/><circle cx="550.0" cy="310.2" r="3.2" fill="#86c06c" stroke="#3f6e32" stroke-width="0.6"/><circle cx="549.3" cy="312.6" r="3.2" fill="#86c06c" stroke="#3f6e32" stroke-width="0.6"/><circle cx="548.6" cy="314.9" r="3.2" fill="#86c06c" stroke="#3f6e32" stroke-width="0.6"/><circle cx="547.9" cy="317.3" r="3.2" fill="#86c06c" stroke="#3f6e32" stroke-width="0.6"/><circle cx="547.1" cy="319.6" r="3.2" fill="#86c06c" stroke="#3f6e32" stroke-width="0.6"/><circle cx="546.4" cy="322.0" r="3.2" fill="#86c06c" stroke="#3f6e32" stroke-width="0.6"/><circle cx="545.6" cy="324.3" r="3.2" fill="#86c06c" stroke="#3f6e32" stroke-width="0.6"/><circle cx="544.8" cy="326.6" r="3.2" fill="#86c06c" stroke="#3f6e32" stroke-width="0.6"/><circle cx="544.0" cy="328.9" r="3.2" fill="#86c06c" stroke="#3f6e32" stroke-width="0.6"/><circle cx="543.2" cy="331.2" r="3.2" fill="#86c06c" stroke="#3f6e32" stroke-width="0.6"/><circle cx="542.4" cy="333.5" r="3.2" fill="#86c06c" stroke="#3f6e32" stroke-width="0.6"/><circle cx="541.6" cy="335.8" r="3.2" fill="#86c06c" stroke="#3f6e32" stroke-width="0.6"/><circle cx="540.8" cy="338.1" r="3.2" fill="#86c06c" stroke="#3f6e32" stroke-width="0.6"/><circle cx="540.0" cy="340.4" r="3.2" fill="#86c06c" stroke="#3f6e32" stroke-width="0.6"/><circle cx="539.2" cy="342.7" r="3.2" fill="#86c06c" stroke="#3f6e32" stroke-width="0.6"/><circle cx="538.4" cy="345.0" r="3.2" fill="#86c06c" stroke="#3f6e32" stroke-width="0.6"/><circle cx="537.6" cy="347.3" r="3.2" fill="#86c06c" stroke="#3f6e32" stroke-width="0.6"/><circle cx="536.8" cy="349.7" r="3.2" fill="#86c06c" stroke="#3f6e32" stroke-width="0.6"/><circle cx="535.9" cy="352.0" r="3.2" fill="#86c06c" stroke="#3f6e32" stroke-width="0.6"/><circle cx="535.1" cy="354.3" r="3.2" fill="#86c06c" stroke="#3f6e32" stroke-width="0.6"/><circle cx="534.3" cy="356.7" r="3.2" fill="#86c06c" stroke="#3f6e32" stroke-width="0.6"/><circle cx="533.5" cy="359.0" r="3.2" fill="#86c06c" stroke="#3f6e32" stroke-width="0.6"/><circle cx="532.6" cy="361.3" r="3.2" fill="#86c06c" stroke="#3f6e32" stroke-width="0.6"/><circle cx="531.8" cy="363.7" r="3.2" fill="#86c06c" stroke="#3f6e32" stroke-width="0.6"/><circle cx="531.0" cy="366.0" r="3.2" fill="#86c06c" stroke="#3f6e32" stroke-width="0.6"/><circle cx="536.0" cy="352.0" r="3.2" fill="#86c06c" stroke="#3f6e32" stroke-width="0.6"/><circle cx="534.7" cy="355.3" r="3.2" fill="#86c06c" stroke="#3f6e32" stroke-width="0.6"/><circle cx="533.3" cy="358.7" r="3.2" fill="#86c06c" stroke="#3f6e32" stroke-width="0.6"/><circle cx="532.0" cy="362.0" r="3.2" fill="#86c06c" stroke="#3f6e32" stroke-width="0.6"/><circle cx="531.6" cy="365.6" r="3.2" fill="#86c06c" stroke="#3f6e32" stroke-width="0.6"/><circle cx="531.2" cy="369.3" r="3.2" fill="#86c06c" stroke="#3f6e32" stroke-width="0.6"/><circle cx="530.8" cy="372.9" r="3.2" fill="#86c06c" stroke="#3f6e32" stroke-width="0.6"/><circle cx="508.8" cy="371.7" r="3.2" fill="#86c06c" stroke="#3f6e32" stroke-width="0.6"/><circle cx="512.5" cy="371.9" r="3.2" fill="#86c06c" stroke="#3f6e32" stroke-width="0.6"/><circle cx="516.1" cy="372.1" r="3.2" fill="#86c06c" stroke="#3f6e32" stroke-width="0.6"/><circle cx="519.8" cy="372.3" r="3.2" fill="#86c06c" stroke="#3f6e32" stroke-width="0.6"/><circle cx="523.5" cy="372.5" r="3.2" fill="#86c06c" stroke="#3f6e32" stroke-width="0.6"/><circle cx="527.1" cy="372.7" r="3.2" fill="#86c06c" stroke="#3f6e32" stroke-width="0.6"/><circle cx="530.8" cy="372.9" r="3.2" fill="#86c06c" stroke="#3f6e32" stroke-width="0.6"/><circle cx="501.7" cy="389.0" r="3.2" fill="#86c06c" stroke="#3f6e32" stroke-width="0.6"/><circle cx="504.9" cy="389.5" r="3.2" fill="#86c06c" stroke="#3f6e32" stroke-width="0.6"/><circle cx="508.0" cy="390.0" r="3.2" fill="#86c06c" stroke="#3f6e32" stroke-width="0.6"/><circle cx="511.2" cy="390.5" r="3.2" fill="#86c06c" stroke="#3f6e32" stroke-width="0.6"/><circle cx="514.4" cy="391.0" r="3.2" fill="#86c06c" stroke="#3f6e32" stroke-width="0.6"/><circle cx="517.5" cy="391.5" r="3.2" fill="#86c06c" stroke="#3f6e32" stroke-width="0.6"/><circle cx="520.7" cy="392.0" r="3.2" fill="#86c06c" stroke="#3f6e32" stroke-width="0.6"/><circle cx="523.8" cy="392.5" r="3.2" fill="#86c06c" stroke="#3f6e32" stroke-width="0.6"/><circle cx="527.0" cy="393.0" r="3.2" fill="#86c06c" stroke="#3f6e32" stroke-width="0.6"/><circle cx="529.8" cy="393.7" r="3.2" fill="#86c06c" stroke="#3f6e32" stroke-width="0.6"/><circle cx="532.5" cy="394.4" r="3.2" fill="#86c06c" stroke="#3f6e32" stroke-width="0.6"/><circle cx="505.0" cy="396.6" r="3.2" fill="#86c06c" stroke="#3f6e32" stroke-width="0.6"/><circle cx="505.0" cy="396.6" r="3.2" fill="#86c06c" stroke="#3f6e32" stroke-width="0.6"/><circle cx="517.0" cy="396.6" r="3.2" fill="#86c06c" stroke="#3f6e32" stroke-width="0.6"/><circle cx="522.4" cy="397.5" r="3.2" fill="#86c06c" stroke="#3f6e32" stroke-width="0.6"/><circle cx="529.7" cy="398.8" r="3.2" fill="#86c06c" stroke="#3f6e32" stroke-width="0.6"/><circle cx="501.7" cy="405.6" r="3.2" fill="#86c06c" stroke="#3f6e32" stroke-width="0.6"/><circle cx="501.3" cy="409.7" r="3.2" fill="#86c06c" stroke="#3f6e32" stroke-width="0.6"/><circle cx="501.0" cy="413.7" r="3.2" fill="#86c06c" stroke="#3f6e32" stroke-width="0.6"/><circle cx="500.6" cy="417.8" r="3.2" fill="#86c06c" stroke="#3f6e32" stroke-width="0.6"/><circle cx="500.2" cy="421.9" r="3.2" fill="#86c06c" stroke="#3f6e32" stroke-width="0.6"/><circle cx="499.9" cy="425.9" r="3.2" fill="#86c06c" stroke="#3f6e32" stroke-width="0.6"/><circle cx="499.5" cy="430.0" r="3.2" fill="#86c06c" stroke="#3f6e32" stroke-width="0.6"/><circle cx="498.9" cy="434.0" r="3.2" fill="#86c06c" stroke="#3f6e32" stroke-width="0.6"/><circle cx="498.3" cy="438.1" r="3.2" fill="#86c06c" stroke="#3f6e32" stroke-width="0.6"/><circle cx="497.8" cy="442.1" r="3.2" fill="#86c06c" stroke="#3f6e32" stroke-width="0.6"/><circle cx="497.2" cy="446.1" r="3.2" fill="#86c06c" stroke="#3f6e32" stroke-width="0.6"/><circle cx="496.6" cy="450.2" r="3.2" fill="#86c06c" stroke="#3f6e32" stroke-width="0.6"/><circle cx="496.0" cy="454.2" r="3.2" fill="#86c06c" stroke="#3f6e32" stroke-width="0.6"/><circle cx="521.5" cy="414.4" r="3.2" fill="#86c06c" stroke="#3f6e32" stroke-width="0.6"/><circle cx="520.9" cy="418.6" r="3.2" fill="#86c06c" stroke="#3f6e32" stroke-width="0.6"/><circle cx="520.3" cy="422.9" r="3.2" fill="#86c06c" stroke="#3f6e32" stroke-width="0.6"/><circle cx="518.0" cy="428.3" r="3.2" fill="#86c06c" stroke="#3f6e32" stroke-width="0.6"/><circle cx="516.4" cy="440.7" r="3.2" fill="#86c06c" stroke="#3f6e32" stroke-width="0.6"/><circle cx="515.8" cy="444.7" r="3.2" fill="#86c06c" stroke="#3f6e32" stroke-width="0.6"/><circle cx="515.2" cy="448.8" r="3.2" fill="#86c06c" stroke="#3f6e32" stroke-width="0.6"/><circle cx="514.6" cy="452.8" r="3.2" fill="#86c06c" stroke="#3f6e32" stroke-width="0.6"/><circle cx="514.0" cy="456.8" r="3.2" fill="#86c06c" stroke="#3f6e32" stroke-width="0.6"/><circle cx="451.0" cy="451.7" r="3.2" fill="#86c06c" stroke="#3f6e32" stroke-width="0.6"/><circle cx="455.0" cy="452.1" r="3.2" fill="#86c06c" stroke="#3f6e32" stroke-width="0.6"/><circle cx="459.0" cy="452.4" r="3.2" fill="#86c06c" stroke="#3f6e32" stroke-width="0.6"/><circle cx="463.0" cy="452.8" r="3.2" fill="#86c06c" stroke="#3f6e32" stroke-width="0.6"/><circle cx="467.4" cy="455.8" r="3.2" fill="#86c06c" stroke="#3f6e32" stroke-width="0.6"/><circle cx="471.1" cy="456.0" r="3.2" fill="#86c06c" stroke="#3f6e32" stroke-width="0.6"/><circle cx="474.8" cy="456.1" r="3.2" fill="#86c06c" stroke="#3f6e32" stroke-width="0.6"/><circle cx="478.5" cy="456.3" r="3.2" fill="#86c06c" stroke="#3f6e32" stroke-width="0.6"/><circle cx="482.2" cy="456.5" r="3.2" fill="#86c06c" stroke="#3f6e32" stroke-width="0.6"/><circle cx="485.9" cy="456.7" r="3.2" fill="#86c06c" stroke="#3f6e32" stroke-width="0.6"/><circle cx="489.6" cy="456.8" r="3.2" fill="#86c06c" stroke="#3f6e32" stroke-width="0.6"/><circle cx="493.3" cy="457.0" r="3.2" fill="#86c06c" stroke="#3f6e32" stroke-width="0.6"/><circle cx="496.8" cy="454.7" r="3.2" fill="#86c06c" stroke="#3f6e32" stroke-width="0.6"/><circle cx="497.4" cy="449.4" r="3.2" fill="#86c06c" stroke="#3f6e32" stroke-width="0.6"/><circle cx="448.7" cy="458.8" r="3.2" fill="#86c06c" stroke="#3f6e32" stroke-width="0.6"/><circle cx="452.0" cy="459.5" r="3.2" fill="#86c06c" stroke="#3f6e32" stroke-width="0.6"/><circle cx="455.4" cy="460.2" r="3.2" fill="#86c06c" stroke="#3f6e32" stroke-width="0.6"/><circle cx="458.7" cy="460.9" r="3.2" fill="#86c06c" stroke="#3f6e32" stroke-width="0.6"/><circle cx="470.7" cy="468.7" r="3.2" fill="#86c06c" stroke="#3f6e32" stroke-width="0.6"/><circle cx="474.8" cy="470.6" r="3.2" fill="#86c06c" stroke="#3f6e32" stroke-width="0.6"/><circle cx="479.0" cy="471.0" r="3.2" fill="#86c06c" stroke="#3f6e32" stroke-width="0.6"/><circle cx="483.1" cy="471.5" r="3.2" fill="#86c06c" stroke="#3f6e32" stroke-width="0.6"/><circle cx="487.3" cy="471.9" r="3.2" fill="#86c06c" stroke="#3f6e32" stroke-width="0.6"/><circle cx="491.4" cy="472.4" r="3.2" fill="#86c06c" stroke="#3f6e32" stroke-width="0.6"/><circle cx="495.6" cy="472.8" r="3.2" fill="#86c06c" stroke="#3f6e32" stroke-width="0.6"/><circle cx="601" cy="202.4" r="3.1" fill="#f4a9b8"/><circle cx="603" cy="220" r="3.1" fill="#f4a9b8"/><circle cx="624" cy="216" r="3.1" fill="#f4a9b8"/><circle cx="588" cy="233.6" r="3.1" fill="#f4a9b8"/><circle cx="617" cy="246" r="3.1" fill="#f4a9b8"/><circle cx="619" cy="263" r="3.1" fill="#f4a9b8"/><circle cx="576" cy="271" r="3.1" fill="#f4a9b8"/><circle cx="588" cy="270" r="3.1" fill="#f4a9b8"/><circle cx="614" cy="283" r="3.1" fill="#f4a9b8"/><circle cx="569" cy="292" r="3.1" fill="#f4a9b8"/><circle cx="610" cy="295" r="3.1" fill="#f4a9b8"/><circle cx="577" cy="302" r="3.1" fill="#f4a9b8"/><circle cx="608" cy="307" r="3.1" fill="#f4a9b8"/><circle cx="564" cy="311" r="3.1" fill="#f4a9b8"/><circle cx="557" cy="331" r="3.1" fill="#f4a9b8"/><circle cx="566" cy="333" r="3.1" fill="#f4a9b8"/><circle cx="601" cy="338" r="3.1" fill="#f4a9b8"/><circle cx="586" cy="346" r="3.1" fill="#f4a9b8"/><circle cx="550" cy="353" r="3.1" fill="#f4a9b8"/><circle cx="563" cy="357" r="3.1" fill="#f4a9b8"/><circle cx="579" cy="361" r="3.1" fill="#f4a9b8"/><circle cx="603" cy="365" r="3.1" fill="#f4a9b8"/><circle cx="557" cy="375" r="3.1" fill="#f4a9b8"/><circle cx="538" cy="388" r="3.1" fill="#f4a9b8"/><circle cx="548" cy="388" r="3.1" fill="#f4a9b8"/><circle cx="584" cy="400" r="3.1" fill="#f4a9b8"/><circle cx="531" cy="406" r="3.1" fill="#f4a9b8"/><circle cx="542" cy="405" r="3.1" fill="#f4a9b8"/><circle cx="545" cy="408" r="3.1" fill="#f4a9b8"/><circle cx="619" cy="427" r="3.1" fill="#f4a9b8"/><circle cx="584" cy="437" r="3.1" fill="#f4a9b8"/><circle cx="522" cy="440" r="3.1" fill="#f4a9b8"/><circle cx="530" cy="453" r="3.1" fill="#f4a9b8"/><circle cx="565" cy="456" r="3.1" fill="#f4a9b8"/><circle cx="514" cy="464" r="3.1" fill="#f4a9b8"/><circle cx="527" cy="466" r="3.1" fill="#f4a9b8"/><circle cx="547" cy="469" r="3.1" fill="#f4a9b8"/><circle cx="569" cy="475" r="3.1" fill="#f4a9b8"/><circle cx="593" cy="478" r="3.1" fill="#f4a9b8"/><circle cx="507" cy="479" r="3.1" fill="#f4a9b8"/><circle cx="523" cy="482" r="3.1" fill="#f4a9b8"/><circle cx="630" cy="484" r="3.1" fill="#f4a9b8"/><circle cx="540" cy="488" r="3.1" fill="#f4a9b8"/><circle cx="604" cy="492" r="3.1" fill="#f4a9b8"/><circle cx="646" cy="496" r="3.1" fill="#f4a9b8"/><circle cx="668" cy="500" r="3.1" fill="#f4a9b8"/><circle cx="498" cy="501" r="3.1" fill="#f4a9b8"/><circle cx="503" cy="501" r="3.1" fill="#f4a9b8"/><circle cx="552" cy="502" r="3.1" fill="#f4a9b8"/><circle cx="582" cy="503" r="3.1" fill="#f4a9b8"/><circle cx="702" cy="437" r="3.1" fill="#f4a9b8"/><circle cx="682" cy="453" r="3.1" fill="#f4a9b8"/><circle cx="684" cy="500" r="3.1" fill="#f4a9b8"/><circle cx="509" cy="524" r="3.1" fill="#f4a9b8"/><circle cx="505" cy="535" r="3.1" fill="#f4a9b8"/><circle cx="487" cy="539" r="3.1" fill="#f4a9b8"/><circle cx="645" cy="532" r="3.1" fill="#f4a9b8"/><circle cx="671" cy="546" r="3.1" fill="#f4a9b8"/><circle cx="679" cy="529" r="3.1" fill="#f4a9b8"/><circle cx="693" cy="543" r="3.1" fill="#f4a9b8"/><circle cx="638" cy="599" r="3.1" fill="#f4a9b8"/><circle cx="648" cy="618" r="3.1" fill="#f4a9b8"/><circle cx="640" cy="638" r="3.1" fill="#f4a9b8"/><circle cx="611" cy="695" r="3.1" fill="#f4a9b8"/></g></svg>
<svg width="1365" height="767" viewBox="0 0 1365 767"><g transform="translate(11.0,50.0)"><path d="M4.3 1 H15 L19.8 5.8 V22.7 H4.3Z" fill="#fff" stroke="#d8d8d8" stroke-width="0.6"/><path d="M15 1 V5.8 H19.8Z" fill="#cfcfcf"/></g><g transform="translate(45.0,50.0)"><path d="M1.5 4.2 h6.2 l1.6 2 h9.6 v3 h-17.4z" fill="#dcb235"/><path d="M1.5 7 h17.4 v13.8 h-17.4z" fill="#e3ba3c"/><path d="M4.6 9.3 H22.6 L19.6 21 H1.5Z" fill="#f9da5c" stroke="#e6bf3e" stroke-width="0.7"/></g><g transform="translate(79.0,50.0)"><rect x="2.3" y="1.4" width="19.4" height="20.6" rx="1.8" fill="#5d8fd1" stroke="#3c67a8" stroke-width="0.9"/><rect x="5.2" y="2" width="13.6" height="9.4" fill="#f4f6fa"/><path d="M6.6 4.3 h10.8 M6.6 6.6 h10.8 M6.6 8.9 h10.8" stroke="#555" stroke-width="0.9"/><rect x="6.4" y="14.4" width="10.8" height="6.6" fill="#e9edf3" stroke="#2f4f80" stroke-width="0.5"/><rect x="8" y="15.6" width="3" height="4.4" fill="#2b3f60"/></g><g transform="translate(113.0,50.0)"><path d="M7.5 2.2 H18.5 L22 5.7 V19.5 H7.5Z" fill="#fff" stroke="#9fb6e6" stroke-width="1"/><path d="M18.5 2.2 V5.7 H22Z" fill="#d0d0d0"/><path d="M1.6 2.4 H10 V6.4 H5.6 V22 H1.6Z" fill="#eec535" stroke="#b99510" stroke-width="0.7"/><path d="M1.8 9 h2 M1.8 12 h2.6 M1.8 15 h2 M1.8 18 h2.6" stroke="#8a6d00" stroke-width="0.6"/><rect x="12.6" y="12" width="10.5" height="10.5" rx="1.6" fill="#c9a20c" stroke="#a88700" stroke-width="0.6"/><line x1="17.85" y1="13.47" x2="17.85" y2="21.03" stroke="#ffffff" stroke-width="1.3"/><line x1="21.12" y1="15.36" x2="14.58" y2="19.14" stroke="#ffffff" stroke-width="1.3"/><line x1="21.12" y1="19.14" x2="14.58" y2="15.36" stroke="#ffffff" stroke-width="1.3"/><circle cx="17.85" cy="17.25" r="2.10" fill="none" stroke="#ffffff" stroke-width="0.9"/></g><g transform="translate(147.0,50.0)"><path d="M1.2 2.2 H17.4 L22.8 7.6 V21.7 H1.2Z" fill="#fff" stroke="#b8b8b8" stroke-width="0.9"/><path d="M17.4 2.2 V7.6 H22.8Z" fill="#f4f4f4" stroke="#9a9a9a" stroke-width="0.7"/><path d="M3.3 4.1 H16.6 V8.6 H20.5 V19.6 H3.3Z" fill="none" stroke="#b4c6f4" stroke-width="1"/><path d="M14.800 13.500 L17.800 11.300 L24 20.600 Q24.400 23.600 21.400 23.400Z" fill="#ecd670" stroke="#8a7a30" stroke-width="0.600"/><path d="M9.200 6.400 A4.300 4.300 0 1 0 16.300 10.600 L14 9.600 A2 2 0 0 1 10.600 8.200 Z" fill="#f0f0f0" stroke="#8a8a8a" stroke-width="0.700"/><path d="M13.200 12.400 L16.200 10.400 L18 12.600 L15 14.800Z" fill="#dcdcdc" stroke="#8a8a8a" stroke-width="0.500"/></g><g transform="translate(181.0,50.0)"><circle cx="6.400" cy="6.400" r="4.450" fill="#d96c35"/><path d="M13.400 10 L21.400 2.700" stroke="#5b9bd5" stroke-width="2" stroke-linecap="round"/><rect x="2.200" y="13.300" width="8.500" height="8.300" fill="#8fbc8f" stroke="#5f9a5f" stroke-width="0.700"/><text x="13.400" y="22" font-family="Liberation Sans,sans-serif" font-size="15.500" fill="#f4f4f4" stroke="#8a8a8a" stroke-width="0.600">a</text></g><rect x="4.25" y="56.5" width="1.5" height="11" fill="#5a5a5a"/><rect x="216.95" y="56.5" width="1.5" height="11" fill="#5a5a5a"/><rect x="220.5" y="46.5" width="32.5" height="32" fill="none" stroke="#e18b1f" stroke-width="1"/><g transform="translate(224.0,50.0)"><path transform="translate(11.75,11.85) scale(1.27) translate(-12,-12.65)" d="M6.4 11.4 c-1 -1.3 -2.6 -0.6 -2 1 l3.6 7 c0.8 1.8 2 2.9 4 2.9 h4.2 c2 0 3 -1.2 3.1 -3.2 l0.3 -8.6 c0 -1.6 -1.9 -1.7 -2.1 -0.2 l-0.3 2.6 l-0.2 -6.3 c0 -1.7 -2.1 -1.7 -2.2 0 l-0.1 5.4 l-0.3 -7.2 c-0.1 -1.8 -2.3 -1.8 -2.3 0 l0 7.3 l-0.9 -5.6 c-0.3 -1.7 -2.3 -1.3 -2.1 0.3 l1.2 8.4z" fill="#fff" stroke="#111" stroke-width="0.75" stroke-linejoin="round"/></g><g transform="translate(258.0,50.0)"><rect x="5" y="3.2" width="11" height="11" fill="#474539"/><path d="M11.5 0.8 l3.4 3.8 h-2.2 v3.2 h-2.4 v-3.2 h-2.2z M11.5 23 l3.4 -3.8 h-2.2 v-3.2 h-2.4 v3.2 h-2.2z M0.8 11.8 l3.8 -3.4 v2.2 h3.2 v2.4 h-3.2 v2.2z M22.6 11.8 l-3.8 -3.4 v2.2 h-3.2 v2.4 h3.2 v2.2z" fill="#4e5053"/></g><g transform="translate(292.0,50.0)"><path d="M8.4 15.4 L2.2 22" stroke="#f2c62c" stroke-width="2.4"/><circle cx="8.8" cy="15.0" r="1.3" fill="#111"/><circle cx="14" cy="9.4" r="7.4" fill="#d9d9d9" stroke="#9c9c9c" stroke-width="0.9"/><path d="M7.8 8.4 a6.2 6.2 0 0 1 12.4 0 q-6.2 -3 -12.4 0z" fill="#f4f4f4"/><path d="M9.4 9.4 h9.2 M14 4.8 v9.2" stroke="#4a86cf" stroke-width="2.2"/></g><g transform="translate(326.0,50.0)"><path d="M8.4 15.4 L2.2 22" stroke="#f2c62c" stroke-width="2.4"/><circle cx="8.8" cy="15.0" r="1.3" fill="#111"/><circle cx="14" cy="9.4" r="7.4" fill="#d9d9d9" stroke="#9c9c9c" stroke-width="0.9"/><path d="M7.8 8.4 a6.2 6.2 0 0 1 12.4 0 q-6.2 -3 -12.4 0z" fill="#f4f4f4"/><path d="M9.4 9.4 h9.2" stroke="#4a86cf" stroke-width="2.2"/></g><g transform="translate(360.0,50.0)"><path d="M8.700000000000001 15.9 L2.2 22" stroke="#f2c62c" stroke-width="2.4"/><circle cx="9.100000000000001" cy="15.5" r="1.3" fill="#111"/><circle cx="14.3" cy="9.9" r="7.6" fill="#d9d9d9" stroke="#9c9c9c" stroke-width="0.9"/><path d="M7.900000000000001 8.9 a6.3999999999999995 6.3999999999999995 0 0 1 12.799999999999999 0 q-6.3999999999999995 -3 -12.799999999999999 0z" fill="#f4f4f4"/><path d="M3.7 0 H12 L9.5 2.5 L12.5 5.5 L9.2 8.8 L6.2 5.8 L3.7 8.4Z M24.1 0 H15.8 L18.3 2.5 L15.3 5.5 L18.6 8.8 L21.6 5.8 L24.1 8.4Z M24.1 20 H15.8 L18.3 17.5 L15.3 14.5 L18.6 11.2 L21.6 14.2 L24.1 11.6Z" fill="#6c9ccc" stroke="#3f6a9c" stroke-width="0.5"/></g><g transform="translate(394.0,50.0)"><rect x="1.4" y="3" width="10" height="12" fill="#47453a"/><path d="M9.8 15.0 L2.2 22" stroke="#4d4a3c" stroke-width="2.2"/><circle cx="15" cy="9.4" r="7.6" fill="#606060" stroke="#565656" stroke-width="0.8"/></g><g transform="translate(428.0,50.0)"><rect x="1.4" y="3" width="10" height="12" fill="#e8e8e8"/><path d="M9.4 15.4 L2.2 22" stroke="#f2c62c" stroke-width="2.4"/><circle cx="9.8" cy="15.0" r="1.3" fill="#111"/><circle cx="15" cy="9.4" r="7.6" fill="#d9d9d9" stroke="#9c9c9c" stroke-width="0.9"/><path d="M8.6 8.4 a6.3999999999999995 6.3999999999999995 0 0 1 12.799999999999999 0 q-6.3999999999999995 -3 -12.799999999999999 0z" fill="#f4f4f4"/><path d="M15 1.8 a7.6 7.6 0 0 0 0 15.2z" fill="#c4c4c4" opacity="0.55"/></g><g transform="translate(462.0,50.0)"><rect x="1.4" y="3" width="8" height="12" fill="#505050"/><path d="M9.399999999999999 15.0 L2.2 22" stroke="#4d4a3c" stroke-width="2.2"/><circle cx="14.6" cy="9.4" r="7.6" fill="#606060" stroke="#565656" stroke-width="0.8"/><text x="9.2" y="13.3" font-family="Liberation Sans,sans-serif" font-weight="bold" font-size="9.5" fill="#3a3a3a" letter-spacing="-0.6">1:1</text></g><g transform="translate(496.0,50.0)"><path d="M8.4 15 L2.2 22" stroke="#f2c62c" stroke-width="2.4"/><circle cx="8.8" cy="14.6" r="1.3" fill="#111"/><circle cx="14" cy="9" r="7.4" fill="#d9d9d9" stroke="#9c9c9c" stroke-width="0.9"/><path d="M7.8 8 a6.2 6.2 0 0 1 12.4 0 q-6.2 -3 -12.4 0z" fill="#f4f4f4"/><rect x="13" y="12.6" width="10.4" height="10.4" fill="#3f78c0" stroke="#2d5a96" stroke-width="0.6"/><path d="M21 14.6 L15.6 17.8 L21 21" fill="none" stroke="#fff" stroke-width="1.9"/></g><g transform="translate(530.0,50.0)"><path d="M8.8 14.6 L2.2 22" stroke="#4d4a3c" stroke-width="2.2"/><circle cx="14" cy="9" r="7.4" fill="#606060" stroke="#565656" stroke-width="0.8"/><rect x="13" y="12.6" width="10.4" height="10.4" fill="#454a50"/><path d="M15.6 14.6 L21 17.8 L15.6 21" fill="none" stroke="#666" stroke-width="1.9"/></g><g transform="translate(564.0,50.0)"><path d="M3 1.6 h3 v17.4 h14.8 v3.6 h-15 c-2 0 -2.8 -1.2 -2.8 -2.6z" fill="#cfcfcf" stroke="#aaa" stroke-width="0.5"/><path d="M5.4 2.2 H21 V19.4 H5.4Z" fill="#ececec" stroke="#c4c4c4" stroke-width="0.6"/><rect x="13" y="12.6" width="10.5" height="10.5" rx="1.6" fill="#c9a20c" stroke="#a88700" stroke-width="0.6"/><line x1="18.25" y1="14.07" x2="18.25" y2="21.63" stroke="#ffffff" stroke-width="1.3"/><line x1="21.52" y1="15.96" x2="14.98" y2="19.74" stroke="#ffffff" stroke-width="1.3"/><line x1="21.52" y1="19.74" x2="14.98" y2="15.96" stroke="#ffffff" stroke-width="1.3"/><circle cx="18.25" cy="17.85" r="2.10" fill="none" stroke="#ffffff" stroke-width="0.9"/></g><g transform="translate(598.0,50.0)"><path d="M5.4 4.4 L19.6 2.6 L22.6 14.4 L1.2 16.2Z" fill="#b9b9b9" stroke="#8c8c8c" stroke-width="0.6"/><path d="M9.6 3.9 L6.6 15.8 M14.4 3.3 L13.4 15.2 M4 8.2 L20.6 6.6 M2.6 12.2 L21.6 10.6" stroke="#e6e6e6" stroke-width="0.7" fill="none"/><rect x="13" y="12.6" width="10.5" height="10.5" rx="1.6" fill="#c9a20c" stroke="#a88700" stroke-width="0.6"/><line x1="18.25" y1="14.07" x2="18.25" y2="21.63" stroke="#ffffff" stroke-width="1.3"/><line x1="21.52" y1="15.96" x2="14.98" y2="19.74" stroke="#ffffff" stroke-width="1.3"/><line x1="21.52" y1="19.74" x2="14.98" y2="15.96" stroke="#ffffff" stroke-width="1.3"/><circle cx="18.25" cy="17.85" r="2.10" fill="none" stroke="#ffffff" stroke-width="0.9"/></g><g transform="translate(632.0,50.0)"><path d="M6.6 1.2 H15.6 V19.6 L11.4 16 L6.6 17.4Z" fill="#6f9fd6" stroke="#2f5d9c" stroke-width="0.9"/><path d="M6.9 1.6 V17" stroke="#24446e" stroke-width="1.2"/><rect x="12.6" y="12.8" width="10.5" height="10.5" rx="1.6" fill="#c9a20c" stroke="#a88700" stroke-width="0.6"/><line x1="17.85" y1="14.27" x2="17.85" y2="21.83" stroke="#ffffff" stroke-width="1.3"/><line x1="21.12" y1="16.16" x2="14.58" y2="19.94" stroke="#ffffff" stroke-width="1.3"/><line x1="21.12" y1="19.94" x2="14.58" y2="16.16" stroke="#ffffff" stroke-width="1.3"/><circle cx="17.85" cy="18.05" r="2.10" fill="none" stroke="#ffffff" stroke-width="0.9"/></g><g transform="translate(666.0,50.0)"><path d="M3 1.6 h3 v17.4 h14.8 v3.6 h-15 c-2 0 -2.8 -1.2 -2.8 -2.6z" fill="#cfcfcf" stroke="#aaa" stroke-width="0.5"/><path d="M5.4 2.2 H21 V19.4 H5.4Z" fill="#ededed" stroke="#c4c4c4" stroke-width="0.6"/><path d="M13.2 2 H17.6 V11.6 L15.4 9.4 L13.2 11.6Z" fill="#5a8fd2" stroke="#2f5d9c" stroke-width="0.6"/></g><g transform="translate(700.0,50.0)"><circle cx="12" cy="12.2" r="10" fill="#f0f0f0" stroke="#d0d0d0" stroke-width="0.8"/><circle cx="12" cy="12.2" r="8.6" fill="none" stroke="#4a86cf" stroke-width="1" stroke-dasharray="0.9 3.6"/><path d="M12 5 V12.6 L16.6 16.4" fill="none" stroke="#555" stroke-width="1.5"/></g><g transform="translate(734.0,50.0)"><g transform="translate(12,12) scale(1.13,1.18) translate(-12,-12.1)"><path d="M2.6 11.4 a9 8 0 0 1 14.6 -5.6 l2.6 -2.8 l0.8 9 h-9 l2.8 -3 a5 4.6 0 0 0 -7.6 2.8z" fill="#4f8fd8" stroke="#2c5fa4" stroke-width="0.7"/><path d="M21.4 12.8 a9 8 0 0 1 -14.6 5.6 l-2.6 2.8 l-0.8 -9 h9 l-2.8 3 a5 4.6 0 0 0 7.6 -2.8z" fill="#4f8fd8" stroke="#2c5fa4" stroke-width="0.7"/></g></g><rect x="769.75" y="56.5" width="1.5" height="11" fill="#5a5a5a"/><g transform="translate(776.0,50.0)"><path d="M3.6 2.2 L17.6 2 L17 15.4 L3.8 15.8Z" fill="#f2d437" stroke="#9b8610" stroke-width="0.7" stroke-dasharray="1.6 1"/><path d="M17.6 2.2 L22.6 0.8 L21.4 8 L16.8 9.4Z" fill="#bdbdbd"/><path d="M4.6 3.4 L11 14 M10 4 L9 14" stroke="#9b8610" stroke-width="0.5" stroke-dasharray="1.5 1"/><path d="M10.2 8.6 L21.2 18.4 L16.6 18.2 L19 22.6 L17 23.6 L14.6 19.2 L11.2 22.2Z" fill="#fff" stroke="#222" stroke-width="0.8"/></g><path d="M809.8 60.4 h5.4 l-1.7 3 v0.9 h-2 v-0.9z" fill="#9a9a9a"/><g transform="translate(826.5,50.0)"><rect x="6.4" y="8" width="16" height="14.6" fill="#efd02f" stroke="#b59a10" stroke-width="0.7"/><rect x="2.2" y="2.6" width="15.4" height="13.6" fill="#c9c9c9" stroke="#888" stroke-width="0.7"/><rect x="4.2" y="5" width="11.4" height="3.2" fill="#f6f6f6" stroke="#8a8a8a" stroke-width="0.5"/><rect x="4.2" y="10.4" width="11.4" height="3.2" fill="#f6f6f6" stroke="#8a8a8a" stroke-width="0.5"/></g><path d="M860.3 60.4 h5.4 l-1.7 3 v0.9 h-2 v-0.9z" fill="#9a9a9a"/><g transform="translate(877.0,50.0)"><rect x="2" y="1.8" width="14" height="14" fill="#f4d935" stroke="#c4a713" stroke-width="0.8"/><rect x="6.6" y="6.2" width="14" height="14" fill="#f4d935" stroke="#c4a713" stroke-width="0.8"/><rect x="13.6" y="13" width="10.6" height="10.6" rx="2" fill="#cc1f26"/><circle cx="18.9" cy="18.3" r="3.5" fill="none" stroke="#fff" stroke-width="1.4"/><path d="M16.5 20.7 L21.3 15.9" stroke="#fff" stroke-width="1.4"/></g><path d="M909.8 60.4 h5.4 l-1.7 3 v0.9 h-2 v-0.9z" fill="#9a9a9a"/><g transform="translate(926.5,50.0)"><rect x="2.4" y="1.8" width="14.6" height="14.4" fill="#f4d935" stroke="#c4a713" stroke-width="0.8"/><path d="M20.8 12.4 a3.4 3.4 0 0 1 3.4 3.4 c0 2.6 -3.4 7 -3.4 7 c0 0 -3.4 -4.4 -3.4 -7 a3.4 3.4 0 0 1 3.4 -3.4z" fill="#5b88b4" transform="translate(-1.4,0)"/><circle cx="19.4" cy="15.8" r="1.3" fill="#323232"/></g><path d="M960.0 60.4 h5.4 l-1.7 3 v0.9 h-2 v-0.9z" fill="#9a9a9a"/><rect x="979.25" y="56.5" width="1.5" height="11" fill="#5a5a5a"/><g transform="translate(985.0,50.0)"><circle cx="9.6" cy="9.6" r="8.4" fill="#5b8ccc" stroke="#8fb3e4" stroke-width="0.8"/><text x="6.6" y="14.4" font-family="Liberation Serif,serif" font-style="italic" font-weight="bold" font-size="14" fill="#fff">i</text><path d="M12.6 10.6 L23.4 19.6 L18.8 19.6 L21.2 23.6 L19.4 24.6 L17 20.6 L13.8 23.6Z" fill="#fff" stroke="#222" stroke-width="0.8"/></g><g transform="translate(1020.0,50.0)"><path d="M2.6 1.6 V21 M21.4 1.6 V21" stroke="#bdbdbd" stroke-width="1.2"/><path d="M2.6 4.4 H21.4 M2.6 10.8 H21.4 M2.6 17 H21.4" stroke="#888" stroke-width="0.6"/><path d="M1 21.4 H23" stroke="#d8d8d8" stroke-width="1.8"/><circle cx="9.6" cy="4.4" r="2.3" fill="#d9303a"/><circle cx="18" cy="4.4" r="2.3" fill="#d9303a"/><circle cx="7.4" cy="10.8" r="2.3" fill="#79c27c"/><circle cx="12.6" cy="10.8" r="2.3" fill="#79c27c"/><circle cx="7.4" cy="17" r="2.3" fill="#8cc4e6"/><circle cx="12.6" cy="17" r="2.3" fill="#8cc4e6"/><circle cx="17.8" cy="17" r="2.3" fill="#8cc4e6"/><circle cx="9.6" cy="4.4" r="0.7" fill="#fff"/><circle cx="18" cy="4.4" r="0.7" fill="#fff"/><circle cx="7.4" cy="10.8" r="0.7" fill="#fff"/><circle cx="12.6" cy="10.8" r="0.7" fill="#fff"/><circle cx="7.4" cy="17" r="0.7" fill="#fff"/><circle cx="12.6" cy="17" r="0.7" fill="#fff"/><circle cx="17.8" cy="17" r="0.7" fill="#fff"/></g><rect x="1050.5" y="46.5" width="32" height="32" fill="none" stroke="#e18b1f" stroke-width="1"/><g transform="translate(1054.0,50.0)"><line x1="12.00" y1="7.70" x2="12.00" y2="2.70" stroke="#6f9fe0" stroke-width="2.9" stroke-linecap="round"/><line x1="15.04" y1="8.96" x2="18.58" y2="5.42" stroke="#6f9fe0" stroke-width="2.9" stroke-linecap="round"/><line x1="16.30" y1="12.00" x2="21.30" y2="12.00" stroke="#6f9fe0" stroke-width="2.9" stroke-linecap="round"/><line x1="15.04" y1="15.04" x2="18.58" y2="18.58" stroke="#6f9fe0" stroke-width="2.9" stroke-linecap="round"/><line x1="12.00" y1="16.30" x2="12.00" y2="21.30" stroke="#6f9fe0" stroke-width="2.9" stroke-linecap="round"/><line x1="8.96" y1="15.04" x2="5.42" y2="18.58" stroke="#6f9fe0" stroke-width="2.9" stroke-linecap="round"/><line x1="7.70" y1="12.00" x2="2.70" y2="12.00" stroke="#6f9fe0" stroke-width="2.9" stroke-linecap="round"/><line x1="8.96" y1="8.96" x2="5.42" y2="5.42" stroke="#6f9fe0" stroke-width="2.9" stroke-linecap="round"/><circle cx="12" cy="12" r="4.3" fill="none" stroke="#6f9fe0" stroke-width="3.0"/></g><g transform="translate(1088.0,50.0)"><path d="M3.6 2.4 H18 V6.4 H16.8 C16.6 4.6 16 4 14 4 H7.6 L13.4 11.6 L6.8 19.6 H15 C17 19.6 17.8 18.6 18.4 16.6 H19.4 L18.2 21.6 H3.4 V20.6 L10.4 12.2 L3.6 3.4Z" fill="#b300b3" stroke="#b300b3" stroke-width="0.4"/></g><g transform="translate(1122.0,50.0)"><rect x="2.4" y="1.8" width="19.2" height="19.6" fill="#f6f8fb" stroke="#8fb0e0" stroke-width="1"/><rect x="3" y="2.4" width="18" height="4.4" fill="#5a8fd2"/><path d="M5.2 4.6 h3.6 M11.2 4.6 h8" stroke="#cfe0f5" stroke-width="1.1"/><path d="M5.2 9.4 h3.6 M11.2 9.4 h8 M5.2 12.4 h3.6 M11.2 12.4 h8 M5.2 15.4 h3.6 M11.2 15.4 h8 M5.2 18.4 h3.6 M11.2 18.4 h8" stroke="#4a86cf" stroke-width="1.2"/></g><path d="M1155.0 60.4 h5.4 l-1.7 3 v0.9 h-2 v-0.9z" fill="#9a9a9a"/><g transform="translate(1171.7,50.0)"><path d="M2.6 5.6 H21.4 M2.6 3.6 V7.6 M21.4 3.6 V7.6" stroke="#4e79a8" stroke-width="1.1" fill="none"/><rect x="1.8" y="12" width="20.6" height="7.6" fill="#d9d9d9" stroke="#aaa" stroke-width="0.5"/><path d="M4.4 12 v3 M7 12 v4.6 M9.6 12 v3 M12.2 12 v4.6 M14.8 12 v3 M17.4 12 v4.6 M20 12 v3" stroke="#555" stroke-width="0.9"/></g><path d="M1204.8 60.4 h5.4 l-1.7 3 v0.9 h-2 v-0.9z" fill="#9a9a9a"/><g transform="translate(1221.3,50.0)"><path d="M4.4 2 H19.6 Q22.6 2 22.6 5 V10.4 Q22.6 13.4 19.6 13.4 H12.6 L8 19 V13.4 H4.4 Q1.4 13.4 1.4 10.4 V5 Q1.4 2 4.4 2Z" fill="#fbed8e" stroke="#e0c02c" stroke-width="1.1"/><path d="M4 3.4 H20" stroke="#fffbe0" stroke-width="1.2"/><circle cx="5.6" cy="19.6" r="3" fill="#7cbf87"/></g><g transform="translate(1254.0,50.0)"><line x1="11.00" y1="3.40" x2="11.00" y2="1.00" stroke="#585858" stroke-width="3.2" stroke-linecap="round"/><line x1="15.11" y1="4.74" x2="16.53" y2="2.80" stroke="#585858" stroke-width="3.2" stroke-linecap="round"/><line x1="17.66" y1="8.24" x2="19.94" y2="7.50" stroke="#585858" stroke-width="3.2" stroke-linecap="round"/><line x1="17.66" y1="12.56" x2="19.94" y2="13.30" stroke="#585858" stroke-width="3.2" stroke-linecap="round"/><line x1="15.11" y1="16.06" x2="16.53" y2="18.00" stroke="#585858" stroke-width="3.2" stroke-linecap="round"/><line x1="11.00" y1="17.40" x2="11.00" y2="19.80" stroke="#585858" stroke-width="3.2" stroke-linecap="round"/><line x1="6.89" y1="16.06" x2="5.47" y2="18.00" stroke="#585858" stroke-width="3.2" stroke-linecap="round"/><line x1="4.34" y1="12.56" x2="2.06" y2="13.30" stroke="#585858" stroke-width="3.2" stroke-linecap="round"/><line x1="4.34" y1="8.24" x2="2.06" y2="7.50" stroke="#585858" stroke-width="3.2" stroke-linecap="round"/><line x1="6.89" y1="4.74" x2="5.47" y2="2.80" stroke="#585858" stroke-width="3.2" stroke-linecap="round"/><circle cx="11" cy="10.4" r="7" fill="none" stroke="#585858" stroke-width="2.6"/><circle cx="11" cy="10.4" r="5.8" fill="#4d5257"/><path d="M8.8 7.2 L14.4 10.4 L8.8 13.6Z" fill="#6a6a6a"/><path d="M14.4 13.4 L23 20.6 L19.4 20.4 L21.4 23.8 L20 24.4 L18.2 21 L15.6 23.2Z" fill="#6a6a6a"/></g><path d="M1289.3 60.4 h5.4 l-1.7 3 v0.9 h-2 v-0.9z" fill="#777"/><rect x="4.25" y="95.3" width="1.5" height="11" fill="#5a5a5a"/><g transform="translate(11.0,88.8)"><rect x="2.600" y="8" width="11.600" height="11.600" fill="#e0622c" transform="rotate(20 8 14)"/><rect x="3.400" y="4.600" width="12.600" height="12.600" fill="#f2c230" stroke="#c89a10" stroke-width="0.400" transform="rotate(8 10 11)"/><rect x="8.600" y="1.400" width="13" height="13" fill="#5e8fd0" stroke="#3c67a8" stroke-width="0.500" transform="rotate(-12 15 8)"/><rect x="14.600" y="14.200" width="9" height="9" rx="1.400" fill="#4d9a5b"/><path d="M16.400 18.700 h5.400 M19.100 16 v5.400" stroke="#fff" stroke-width="1.700"/></g><g transform="translate(45.0,88.8)"><path d="M1.6 8.6 L12 13.4 L12 23 L1.6 17.4Z" fill="#e9be24" stroke="#a88700" stroke-width="0.5"/><path d="M12 13.4 L23 8.4 V17 L12 23Z" fill="#f9e36a" stroke="#a88700" stroke-width="0.5"/><path d="M1.6 8.6 L12.4 4.4 L23 8.4 L12 13.4Z" fill="#d2a610"/><circle cx="12.4" cy="7.4" r="6.6" fill="#7da7dc" stroke="#2d4f86" stroke-width="0.7"/><path d="M8 5 q2 -2.6 4 -1 q0.6 2 -1 3 q-2 1.6 -3 -2z M13.4 7.6 q2.6 -2 4.4 -0.4 q0.2 3 -2 4 q-2 -0.6 -2.4 -3.6z M9 10 q1.6 -0.4 2 1.2 q-0.6 1.4 -2 -1.2z" fill="#1f3f73"/><rect x="13.4" y="13.4" width="10" height="10" rx="1.6" fill="#c9a20c" stroke="#a88700" stroke-width="0.6"/><line x1="18.40" y1="14.80" x2="18.40" y2="22.00" stroke="#ffffff" stroke-width="1.3"/><line x1="21.52" y1="16.60" x2="15.28" y2="20.20" stroke="#ffffff" stroke-width="1.3"/><line x1="21.52" y1="20.20" x2="15.28" y2="16.60" stroke="#ffffff" stroke-width="1.3"/><circle cx="18.4" cy="18.4" r="2.00" fill="none" stroke="#ffffff" stroke-width="0.9"/></g><g transform="translate(79.0,88.8)"><path d="M3.4 2.6 L10.2 18 L17 2.6" fill="none" stroke="#243a5e" stroke-width="0.9"/><path d="M20.8 2.6 h0" stroke="#fff"/><path d="M1.9 2.6 h3 M3.4 1.1 v3" stroke="#e8eef8" stroke-width="0.9"/><path d="M15.5 2.6 h3 M17 1.1 v3" stroke="#e8eef8" stroke-width="0.9"/><path d="M19.9 2.6 h3 M21.4 1.1 v3" stroke="#e8eef8" stroke-width="0.9"/><rect x="9.2" y="17" width="2" height="2" fill="#e8eef8"/><rect x="13.4" y="13.4" width="10" height="10" rx="1.6" fill="#c9a20c" stroke="#a88700" stroke-width="0.6"/><line x1="18.40" y1="14.80" x2="18.40" y2="22.00" stroke="#ffffff" stroke-width="1.3"/><line x1="21.52" y1="16.60" x2="15.28" y2="20.20" stroke="#ffffff" stroke-width="1.3"/><line x1="21.52" y1="20.20" x2="15.28" y2="16.60" stroke="#ffffff" stroke-width="1.3"/><circle cx="18.4" cy="18.4" r="2.00" fill="none" stroke="#ffffff" stroke-width="0.9"/></g><g transform="translate(113.0,88.8)"><path d="M2.4 22.6 C4 12 10 3.6 22.4 1 C22.6 8 17.6 14.6 7.6 15.6 C5.6 17.6 4.2 20 3.4 22.8Z" fill="#7fa9dc" stroke="#34639f" stroke-width="0.8"/><path d="M3.2 21.6 C7 12.6 12.6 6.6 20.6 2.6" fill="none" stroke="#dbe8f7" stroke-width="0.8"/><rect x="13.4" y="13.4" width="10" height="10" rx="1.6" fill="#c9a20c" stroke="#a88700" stroke-width="0.6"/><line x1="18.40" y1="14.80" x2="18.40" y2="22.00" stroke="#ffffff" stroke-width="1.3"/><line x1="21.52" y1="16.60" x2="15.28" y2="20.20" stroke="#ffffff" stroke-width="1.3"/><line x1="21.52" y1="20.20" x2="15.28" y2="16.60" stroke="#ffffff" stroke-width="1.3"/><circle cx="18.4" cy="18.4" r="2.00" fill="none" stroke="#ffffff" stroke-width="0.9"/></g><g transform="translate(148.0,88.8)"><path d="M6 2.4 v3.6 M9 2.4 v3.6 M12 2.4 v3.6 M15 2.4 v3.6 M18 2.4 v3.6 M6 17 v3.6 M9 17 v3.6 M12 17 v3.6" stroke="#3f76c2" stroke-width="0.9"/><rect x="2.8" y="6.6" width="17.8" height="10" fill="#6c9fdc" stroke="#2f5d9c" stroke-width="0.8"/><rect x="13.4" y="13.4" width="10" height="10" rx="1.6" fill="#c9a20c" stroke="#a88700" stroke-width="0.6"/><line x1="18.40" y1="14.80" x2="18.40" y2="22.00" stroke="#ffffff" stroke-width="1.3"/><line x1="21.52" y1="16.60" x2="15.28" y2="20.20" stroke="#ffffff" stroke-width="1.3"/><line x1="21.52" y1="20.20" x2="15.28" y2="16.60" stroke="#ffffff" stroke-width="1.3"/><circle cx="18.4" cy="18.4" r="2.00" fill="none" stroke="#ffffff" stroke-width="0.9"/></g><g transform="translate(181.5,88.8)"><rect x="1" y="1.6" width="21" height="10.6" fill="#8db3e2" stroke="#2f5d9c" stroke-width="0.9"/><path d="M11.4 1.6 v10.6 M1 1.6 L11.4 12.2 M11.4 1.6 L1 12.2 M22 1.6 L11.4 12.2" stroke="#24446e" stroke-width="0.8" fill="none"/><rect x="1" y="14" width="9.6" height="8.4" fill="#5a8fd2"/><path d="M1 18.2 h9.6 M5.8 14 v8.4" stroke="#dfeaf8" stroke-width="0.9"/><rect x="1" y="14" width="9.6" height="8.4" fill="none" stroke="#2f5d9c" stroke-width="0.8"/><rect x="13.4" y="13.4" width="10" height="10" rx="1.6" fill="#c9a20c" stroke="#a88700" stroke-width="0.6"/><line x1="18.40" y1="14.80" x2="18.40" y2="22.00" stroke="#ffffff" stroke-width="1.3"/><line x1="21.52" y1="16.60" x2="15.28" y2="20.20" stroke="#ffffff" stroke-width="1.3"/><line x1="21.52" y1="20.20" x2="15.28" y2="16.60" stroke="#ffffff" stroke-width="1.3"/><circle cx="18.4" cy="18.4" r="2.00" fill="none" stroke="#ffffff" stroke-width="0.9"/></g><g transform="translate(215.0,88.8)"><rect x="1" y="1.6" width="21.4" height="20.6" rx="1.2" fill="#b7cfee" stroke="#3a6cae" stroke-width="0.9"/><path d="M2.4 3 L8 17.6 L14.6 3 L22 3" fill="none" stroke="#21436f" stroke-width="1"/><circle cx="8" cy="17.8" r="1.5" fill="#fff" stroke="#21436f" stroke-width="0.7"/><circle cx="14.6" cy="3" r="1.3" fill="#fff" stroke="#21436f" stroke-width="0.6"/><circle cx="2.6" cy="3" r="1.2" fill="#fff" stroke="#21436f" stroke-width="0.6"/><rect x="13.8" y="13.8" width="9.6" height="9.6" rx="1.6" fill="#c9a20c" stroke="#a88700" stroke-width="0.6"/><line x1="18.60" y1="15.14" x2="18.60" y2="22.06" stroke="#ffffff" stroke-width="1.3"/><line x1="21.59" y1="16.87" x2="15.61" y2="20.33" stroke="#ffffff" stroke-width="1.3"/><line x1="21.59" y1="20.33" x2="15.61" y2="16.87" stroke="#ffffff" stroke-width="1.3"/><circle cx="18.6" cy="18.6" r="1.92" fill="none" stroke="#ffffff" stroke-width="0.9"/></g><rect x="251.25" y="95.3" width="1.5" height="11" fill="#5a5a5a"/><g transform="translate(259.0,88.8)"><g transform="translate(2.8,1.4) rotate(0) scale(1.0)"><path d="M9.6 0 L14 1.8 L6.4 17.6 L2 15.8Z" fill="#4a4644" stroke="#333" stroke-width="0.6"/><path d="M2 15.8 L6.4 17.6 L1.4 21.6Z" fill="#5a5a5a"/><path d="M9.6 0 L14 1.8 L13.2 3.4 L8.8 1.6Z" fill="#e8e8e8" opacity="0.25"/></g><g transform="translate(7.6,1.4) rotate(0) scale(1.0)"><path d="M9.6 0 L14 1.8 L6.4 17.6 L2 15.8Z" fill="#4a4644" stroke="#333" stroke-width="0.6"/><path d="M2 15.8 L6.4 17.6 L1.4 21.6Z" fill="#5a5a5a"/><path d="M9.6 0 L14 1.8 L13.2 3.4 L8.8 1.6Z" fill="#e8e8e8" opacity="0.25"/></g></g><path d="M278.3 107.6 h5.4 l-1.7 3 v0.9 h-2 v-0.9z" fill="#888"/><g transform="translate(292.0,88.8)"><g transform="translate(2.8,1)"><path d="M9.6 0 L14.6 2 L6.8 18 L1.8 16Z" fill="#f1d230" stroke="#8a7610" stroke-width="0.7"/><path d="M12 1 L4.4 17" stroke="#fff3a0" stroke-width="1.2"/><path d="M1.8 16 L6.8 18 L1.2 22.4Z" fill="#dcdcdc" stroke="#888" stroke-width="0.5"/><path d="M2 20.4 L3.2 20.9 L1.2 22.4Z" fill="#333"/><path d="M9.6 0 L14.6 2 L13.6 4 L8.6 2Z" fill="#f4f4f4" stroke="#bbb" stroke-width="0.5"/></g></g><g transform="translate(325.5,88.8)"><rect x="2" y="1.8" width="18" height="19" rx="1.4" fill="#505054"/><rect x="4.8" y="2.6" width="12.4" height="8" fill="#484848"/><path d="M6 4.6 h10 M6 6.6 h10 M6 8.6 h10" stroke="#5e5e5e" stroke-width="0.8"/><rect x="6" y="14" width="9" height="5.6" fill="#5c5c5c"/><g transform="translate(13,8.4) rotate(0) scale(0.7)"><path d="M9.6 0 L14 1.8 L6.4 17.6 L2 15.8Z" fill="#4a4644" stroke="#3a3a3a" stroke-width="0.6"/><path d="M2 15.8 L6.4 17.6 L1.4 21.6Z" fill="#5c5c5c"/><path d="M9.6 0 L14 1.8 L13.2 3.4 L8.8 1.6Z" fill="#e8e8e8" opacity="0.25"/></g></g><g transform="translate(359.0,88.8)"><path d="M9 4.4 L20 6 L19.4 16.6 L9.4 20 L3.2 11.6Z" fill="none" stroke="#4d4d4b" stroke-width="2.6" stroke-linejoin="round"/><rect x="7.6" y="3" width="2.8" height="2.8" fill="#5a5a58"/></g><path d="M392.8 99.2 h5.4 l-1.7 3 v0.9 h-2 v-0.9z" fill="#888"/><g transform="translate(410.5,88.8)"><path d="M2 6.4 c0 -3.4 3.4 -4.6 7.4 -4.2 c3 0.4 5 1.6 8 0.8 c3.6 -0.8 5.6 1.2 5.4 4.2 c-0.2 3 -2.4 4.4 -5.6 4 c-3 -0.4 -5 0.6 -7.8 1.4 c-4.4 1.2 -7.4 -2 -7.4 -6.2z" fill="#505250"/><rect x="13.4" y="13" width="10.4" height="10.4" rx="1.6" fill="#4a4638" stroke="#3c392e" stroke-width="0.6"/><line x1="18.60" y1="14.46" x2="18.60" y2="21.94" stroke="#8a8a84" stroke-width="1.3"/><line x1="21.84" y1="16.33" x2="15.36" y2="20.07" stroke="#8a8a84" stroke-width="1.3"/><line x1="21.84" y1="20.07" x2="15.36" y2="16.33" stroke="#8a8a84" stroke-width="1.3"/><circle cx="18.6" cy="18.2" r="2.08" fill="none" stroke="#8a8a84" stroke-width="0.9"/></g><g transform="translate(444.7,88.8)"><circle cx="4.6" cy="5.4" r="1.9" fill="none" stroke="#8a8a8a" stroke-width="0.9"/><path d="M6.6 5.2 H18.6 M4 7.4 L1.4 21.6" stroke="#505050" stroke-width="0.8"/><path d="M7.6 12.4 l4 -3.4 l3.4 0.6 l-4.6 5.4z" fill="#5a5a5a"/><path d="M10.6 12.6 L19.6 22" stroke="#59543f" stroke-width="2.2"/><path d="M19.8 9.6 L8.4 22.2" stroke="#59543f" stroke-width="2"/><path d="M18.6 8.8 l2.2 1.8" stroke="#666" stroke-width="1.6"/></g><path d="M477.3 99.2 h5.4 l-1.7 3 v0.9 h-2 v-0.9z" fill="#999"/><g transform="translate(494.0,88.8)"><rect x="1.8" y="2" width="19.6" height="5" fill="#545241"/><rect x="1.8" y="8.6" width="19.6" height="5" fill="#545241"/><rect x="1.8" y="15.2" width="19.6" height="5.6" fill="#545241"/><g transform="translate(8.4,0.4) rotate(0) scale(1.0)"><path d="M9.6 0 L14 1.8 L6.4 17.6 L2 15.8Z" fill="#5a5250" stroke="#333" stroke-width="0.6"/><path d="M2 15.8 L6.4 17.6 L1.4 21.6Z" fill="#777"/><path d="M9.6 0 L14 1.8 L13.2 3.4 L8.8 1.6Z" fill="#e8e8e8" opacity="1"/></g><path d="M18 0.6 l4.2 1.8 l-0.8 1.8 l-4.2 -1.8z" fill="#8a8a8a"/></g><g transform="translate(526.7,88.8)"><rect x="2.4" y="1.8" width="12" height="14" fill="#4d4b3d"/><path d="M5 3.6 H20.6" stroke="#5a4646" stroke-width="1.4"/><rect x="5.6" y="7.6" width="14.6" height="14.4" fill="#524a4a" stroke="#5e3a3a" stroke-width="0.9"/><path d="M9 10 v10 M12.8 10 v10 M16.6 10 v10" stroke="#3c3838" stroke-width="1.6"/></g><g transform="translate(561.0,88.8)"><path d="M1.6 6 L15.4 12.4 M1.2 12.6 L15.6 10.4" stroke="#585858" stroke-width="1.6" stroke-linecap="round"/><ellipse cx="19" cy="9" rx="3.6" ry="2.4" fill="none" stroke="#4e3030" stroke-width="0.8" transform="rotate(-35 19 9)"/><ellipse cx="18.6" cy="16" rx="3.8" ry="2.2" fill="none" stroke="#4e3030" stroke-width="0.8" transform="rotate(55 18.6 16)"/></g><g transform="translate(595.5,88.8)"><path d="M8.6 2 H15 L18.6 5.6 V17.6 H8.6Z" fill="#484848"/><path d="M3.6 6.6 H10.4 L14 10.2 V22.4 H3.6Z" fill="#5a5a5a"/><path d="M5.2 12 h7 M5.2 14.2 h7 M5.2 16.4 h7 M5.2 18.6 h7 M5.2 20.6 h7" stroke="#3a3a3a" stroke-width="0.8"/></g><g transform="translate(629.7,88.8)"><rect x="3" y="3.2" width="16.6" height="19.6" rx="1" fill="#514e4c" stroke="#5e5c5a" stroke-width="0.8"/><rect x="7.4" y="1.6" width="7.6" height="3.4" fill="#5a5a5a"/><path d="M6 6.4 H13.6 L16.6 9.4 V20.6 H6Z" fill="#5e5e5e"/><path d="M7.6 11.4 h7 M7.6 13.6 h7 M7.6 15.8 h7 M7.6 18 h7" stroke="#3a3a3a" stroke-width="0.8"/></g><g transform="translate(664.0,88.8)"><path d="M1.6 10.4 L9.6 3.2 V7.4 C16 7.4 19.6 10.6 19.2 15 C18.8 19 15.6 21 11.6 20.6 V17.6 C14 17.6 15.4 16.4 15.2 14.4 C15 12.6 13 12.2 9.6 12.4 V17.4Z" fill="#565352"/></g><g transform="translate(698.0,88.8)"><path d="M22.4 10.4 L14.4 3.2 V7.4 C8 7.4 4.4 10.6 4.8 15 C5.2 19 8.4 21 12.4 20.6 V17.6 C10 17.6 8.6 16.4 8.8 14.4 C9 12.6 11 12.2 14.4 12.4 V17.4Z" fill="#4e5252"/></g><rect x="733.95" y="95.3" width="1.5" height="11" fill="#5a5a5a"/><g transform="translate(739.7,88.8)"><path d="M1.6 9.7 L6.2 4.3 H22 V15.1 H6.2Z" fill="#f2d330" stroke="#a88d08" stroke-width="0.9"/><text x="6.4" y="12.6" font-family="Liberation Sans,sans-serif" font-weight="bold" font-size="8.2" textLength="13.4" lengthAdjust="spacingAndGlyphs" fill="#1a1a1a">abc</text></g><g transform="translate(774.0,88.8)"><circle cx="10" cy="8.7" r="6.7" fill="#c8102e"/><path d="M10 8.7 L4.2 5.35 A6.7 6.7 0 0 1 15.8 5.35Z" fill="#f7cf1d"/><path d="M10 8.7 L10 15.4 A6.7 6.7 0 0 1 4.2 5.35Z" fill="#12a84e"/><path d="M10 8.7 L15.8 5.35 A6.7 6.7 0 0 1 10 15.4Z" fill="#c01515"/><rect x="11.3" y="16.2" width="3" height="6.6" fill="#f7cf1d" stroke="#b58a00" stroke-width="0.4"/><rect x="15.9" y="10.5" width="2.8" height="12.3" fill="#12a84e" stroke="#0a6a30" stroke-width="0.4"/><rect x="19.7" y="17.2" width="2.8" height="5.6" fill="#c01515" stroke="#7a0a0a" stroke-width="0.4"/></g><rect x="805.75" y="95.3" width="1.5" height="11" fill="#5a5a5a"/><g transform="translate(813.0,88.8)"><path d="M1.2 9.7 L5.8 4.3 H21.6 V15.1 H5.8Z" fill="#c4dbf8" stroke="#4a90e0" stroke-width="0.9"/><text x="6.0" y="12.6" font-family="Liberation Sans,sans-serif" font-weight="bold" font-size="8.4" textLength="9.2" lengthAdjust="spacingAndGlyphs" fill="#2a2a2a">ab</text><circle cx="20" cy="18.4" r="4.4" fill="#a81c22"/><path d="M18.4 8.6 l1.4 0 l0.8 6 h-2.6z" fill="#f4f4f4" stroke="#888" stroke-width="0.4"/></g><g transform="translate(846.7,88.8)"><path d="M1.6 9.7 L6.2 4.3 H22.6 V15.1 H6.2Z" fill="#e30613" stroke="#e30613" stroke-width="0.9"/><text x="6.4" y="12.6" font-family="Liberation Sans,sans-serif" font-weight="bold" font-size="8.2" textLength="13.4" lengthAdjust="spacingAndGlyphs" fill="#fff">abc</text><path d="M3.4 9.7 L6.8 5.6 H21.2 V13.8 H6.8Z" fill="none" stroke="#fff" stroke-width="0.7"/></g><rect x="878.75" y="95.3" width="1.5" height="11" fill="#5a5a5a"/><g transform="translate(885.5,88.8)"><path d="M1.2 9.7 L5.8 4.3 H21.6 V15.1 H5.8Z" fill="#4f4d41" stroke="#4a483e" stroke-width="0.9"/><text x="6.0" y="12.6" font-family="Liberation Sans,sans-serif" font-weight="bold" font-size="8.4" textLength="9.2" lengthAdjust="spacingAndGlyphs" fill="#2f2f2f">ab</text><circle cx="19.4" cy="18.6" r="4.2" fill="#4c4444"/><path d="M18 8.6 l1.6 0 l0.6 6 h-2.6z" fill="#5a5a5a"/></g><g transform="translate(919.7,88.8)"><path d="M1.2 9.7 L5.8 4.3 H21.6 V15.1 H5.8Z" fill="#4f4d41" stroke="#4a483e" stroke-width="0.9"/><text x="6.0" y="12.6" font-family="Liberation Sans,sans-serif" font-weight="bold" font-size="8.2" textLength="13.4" lengthAdjust="spacingAndGlyphs" fill="#2f2f2f">abc</text><path d="M11 21.6 q5 -5.6 10 0 q-5 4.6 -10 0z" fill="#2c2c2c" stroke="#3a3a3a" stroke-width="0.5"/><circle cx="16" cy="21.4" r="2.2" fill="#5a5a5a"/><circle cx="16" cy="21.4" r="1" fill="#2a2a2a"/></g><g transform="translate(954.0,88.8)"><path d="M1.2 9.7 L5.8 4.3 H21.6 V15.1 H5.8Z" fill="#4f4d41" stroke="#4a483e" stroke-width="0.9"/><text x="6.0" y="12.6" font-family="Liberation Sans,sans-serif" font-weight="bold" font-size="8.2" textLength="13.4" lengthAdjust="spacingAndGlyphs" fill="#2f2f2f">abc</text><rect x="13.6" y="14.6" width="10" height="9.6" rx="1.4" fill="#4a4e52"/><path d="M15 19.4 h4.4 v-2.6 l3.4 3.2 l-3.4 3.2 v-2.6 h-4.4z" fill="#777"/></g><g transform="translate(987.7,88.8)"><path d="M1.2 9.7 L5.8 4.3 H21.6 V15.1 H5.8Z" fill="#4f4d41" stroke="#4a483e" stroke-width="0.9"/><text x="6.0" y="12.6" font-family="Liberation Sans,sans-serif" font-weight="bold" font-size="8.2" textLength="13.4" lengthAdjust="spacingAndGlyphs" fill="#2f2f2f">abc</text><rect x="13.6" y="14.6" width="10" height="9.6" rx="1.4" fill="#4a4e52"/><path d="M16.4 21.8 a2.8 2.8 0 1 1 3.4 1" fill="none" stroke="#777" stroke-width="1.2"/><path d="M18.4 23.6 l2.6 -1.6 l-2.8 -1z" fill="#777"/></g><g transform="translate(1021.0,88.8)"><path d="M1.2 9.7 L5.8 4.3 H21.6 V15.1 H5.8Z" fill="#4f4d41" stroke="#4a483e" stroke-width="0.9"/><text x="6.0" y="12.6" font-family="Liberation Sans,sans-serif" font-weight="bold" font-size="8.2" textLength="13.4" lengthAdjust="spacingAndGlyphs" fill="#2f2f2f">abc</text><rect x="13.6" y="14.6" width="10" height="9.6" rx="1.4" fill="#4f4d41"/><path d="M15.4 22.8 L21.6 16.2" stroke="#777" stroke-width="1.8"/></g><rect x="1058.95" y="95.3" width="1.5" height="11" fill="#5a5a5a"/><g transform="translate(1066.3,88.8)"><circle cx="12" cy="11" r="10.8" fill="#d6e4f7" stroke="#3a5f98" stroke-width="0.8"/><path d="M1.400 11 H22.600 M12 0.400 V21 M3.600 5 Q12 9 20.400 5 M3.600 17 Q12 13 20.400 17 M12 0.400 Q3.600 11 12 21.600 M12 0.400 Q20.400 11 12 21.600" fill="none" stroke="#27457a" stroke-width="0.9"/><path d="M5 5 h4 v3 h-4z M13 3.600 h5 v3.600 h-5z M6 12 h5 v2.400 h-5z M14 11 h4 v3.600 h-4z" fill="#27457a"/><path d="M4 3.600 Q8 0.800 12 1.200" stroke="#fff" stroke-width="1.200" fill="none"/><path d="M6.200 13.600 h3.600 l1 4.600 h2.400 l1 -4.600 h3.600 l2.800 7 a3.500 3.500 0 0 1 -6.800 1.200 h-3.600 a3.500 3.500 0 0 1 -6.800 -1.200z" fill="#0a0a0a"/><circle cx="7" cy="21.400" r="1.800" fill="#2d4a78"/><circle cx="17" cy="21.400" r="1.800" fill="#2d4a78"/></g><rect x="1101.75" y="95.3" width="1.5" height="11" fill="#5a5a5a"/><g transform="translate(1109.7,88.8)"><path d="M11.6 1.4 c-4.4 0 -5 1.6 -5 3.4 v2.6 h5.4 v1 h-7.6 c-2.4 0 -3.4 2 -3.4 5 c0 3 1 4.8 3.2 4.8 h2 v-3 c0 -2 1.4 -3.4 3.4 -3.4 h5 c1.6 0 2.6 -1 2.6 -2.6 v-4.4 c0 -2.2 -2 -3.4 -5.600 -3.400z" fill="#3f7fbf"/><circle cx="8.800" cy="4.200" r="1" fill="#fff"/><path d="M12.4 22.600 c4.4 0 5 -1.600 5 -3.400 v-2.600 h-5.400 v-1 h7.600 c2.400 0 3.400 -2 3.400 -5 c0 -3 -1 -4.800 -3.200 -4.800 h-2 v3 c0 2 -1.400 3.400 -3.400 3.400 h-5 c-1.600 0 -2.600 1 -2.600 2.600 v4.400 c0 2.200 2 3.400 5.600 3.400z" fill="#f6c63c"/><circle cx="15.200" cy="19.800" r="1" fill="#fff"/><path d="M17.600 18.400 L23 20.800 L17.600 23.200" fill="none" stroke="#555" stroke-width="0.9"/></g><g transform="translate(1143.0,88.8)"><path d="M12 9.600 L22.600 16.400 L12 23 L1.400 16.400Z" fill="#9fd0ec" stroke="#0a0a0a" stroke-width="1.300" stroke-linejoin="round"/><path d="M12 1 L22.600 9.400 L12 17.600 L1.400 9.400Z" fill="#f4e23a" stroke="#0a0a0a" stroke-width="1.300" stroke-linejoin="round"/><path d="M12 1.800 L17.600 6.200 L12 10.600 L6.400 6.200Z" fill="#9fd0ec" stroke="#0a0a0a" stroke-width="1"/></g><g transform="translate(1177.0,88.8)"><path d="M2 3.600 L17 1.600 V22 L2 21.400Z" fill="#3a3d42"/><path d="M16.400 1.400 L21.400 3.600 V19.400 L16.400 21.600 V1.400Z" fill="#2a8fdd"/><path d="M16.400 5.400 L6.600 14.600 L3.600 12.600 L16.400 1.400Z M16.400 17.600 L6.600 8.400 L3.600 10.400 L16.400 21.600Z" fill="#1f7fd0"/><path d="M4 17 L17 22 L20 20.400 L6 16Z" fill="#1a6ab4" opacity="0.800"/></g><path d="M1209.8 99.2 h5.4 l-1.7 3 v0.9 h-2 v-0.9z" fill="#999"/><g transform="translate(1226.0,88.8)"><path d="M11.600 10.400 L14.400 12.600 L4.400 23.400 Q2.600 24.400 1.600 22.600 Q1 21.400 2 20.400Z" fill="#f5a623" stroke="#b8740a" stroke-width="0.500"/><path d="M8.600 4.400 Q13 0.400 18 1.400 Q21.600 2.400 23 6.400 Q20 4.400 17.600 5.600 L19.400 8 L15.600 12.600 L10.600 8.400 L12.400 6 Q10.400 4.400 8.600 4.400Z" fill="#e4e4e4" stroke="#9a9a9a" stroke-width="0.600"/></g><rect x="1317.25" y="95.3" width="1.5" height="11" fill="#5a5a5a"/><rect x="1360.25" y="95.3" width="1.5" height="11" fill="#5a5a5a"/><g transform="translate(1324.0,88.8)"><rect x="2.600" y="1.800" width="18.800" height="20.600" fill="#6d9bc9" stroke="#1d2630" stroke-width="0.900"/><rect x="3" y="2.200" width="3.800" height="19.800" fill="#2c3e50"/><text x="10" y="17.600" font-family="Liberation Serif,serif" font-size="15" fill="#fff">?</text></g><rect x="4.25" y="135.3" width="1.5" height="11" fill="#5a5a5a"/><g transform="translate(10.5,128.8)"><path d="M2 22.600 L2 3.400 L21.400 22.600Z M5.600 19.400 L5.600 11.600 L13.400 19.400Z" fill="#554f4c" fill-rule="evenodd"/><rect x="17.600" y="1.600" width="4.600" height="19" fill="#4f4d41"/><path d="M18 4 h2.400 M18 7 h2.400 M18 10 h2.400 M18 13 h2.400 M18 16 h2.400" stroke="#666" stroke-width="0.700"/></g><g transform="translate(45.0,128.8)"><path d="M2 6.0 c0 -3.4 3.4 -4.6 7.4 -4.2 c3 0.4 5 1.6 8 0.8 c3.6 -0.8 5.6 1.2 5.4 4.2 c-0.2 3 -2.4 4.4 -5.6 4 c-3 -0.4 -5 0.6 -7.8 1.4 c-4.4 1.2 -7.4 -2 -7.4 -6.2z" fill="#505250"/><rect x="12.6" y="13" width="10.4" height="10.4" rx="1.4" fill="#4a4e52"/><path d="M14.0 17.0 h4 v-2.4 l3.6 3.6 l-3.6 3.6 v-2.4 h-4z" fill="#7a7a7a"/></g><path d="M78.3 138.4 h5.4 l-1.7 3 v0.9 h-2 v-0.9z" fill="#aaa"/><g transform="translate(95.5,128.8)"><path d="M2 6.0 c0 -3.4 3.4 -4.6 7.4 -4.2 c3 0.4 5 1.6 8 0.8 c3.6 -0.8 5.6 1.2 5.4 4.2 c-0.2 3 -2.4 4.4 -5.6 4 c-3 -0.4 -5 0.6 -7.8 1.4 c-4.4 1.2 -7.4 -2 -7.4 -6.2z" fill="#505250"/><rect x="12.6" y="13" width="10.4" height="10.4" rx="1.4" fill="#4a4e52"/><path d="M16.2 20.8 a3 3 0 1 1 3.6 0.4" fill="none" stroke="#7a7a7a" stroke-width="1.2"/><path d="M17.8 22.6 l2.8 -1.4 l-2.8 -1.4z" fill="#7a7a7a"/></g><g transform="translate(129.0,128.8)"><path d="M2 6.0 c0 -3.4 3.4 -4.6 7.4 -4.2 c3 0.4 5 1.6 8 0.8 c3.6 -0.8 5.6 1.2 5.4 4.2 c-0.2 3 -2.4 4.4 -5.6 4 c-3 -0.4 -5 0.6 -7.8 1.4 c-4.4 1.2 -7.4 -2 -7.4 -6.2z" fill="#505250"/><rect x="12.6" y="13" width="10.4" height="10.4" rx="1.4" fill="#4a4e52"/><path d="M13.4 18.2 l3 -3 v2 h2.800 v-2 l3 3 l-3 3 v-2 h-2.800 v2z" fill="#7a7a7a"/></g><g transform="translate(163.0,128.8)"><circle cx="8.600" cy="8" r="6.800" fill="#4d4d4b"/><path d="M12.600 11.400 h7.600 l3.400 5.600 l-3.400 5.600 h-7.600 l-3.400 -5.600z" fill="#54565a"/><path d="M6.600 7.400 L16 16.400 M16 16.400 l-3.200 -0.400 M16 16.400 l-0.400 -3.200" stroke="#2a2a2a" stroke-width="1" fill="none"/></g><g transform="translate(197.0,128.8)"><path d="M2 6.0 c0 -3.4 3.4 -4.6 7.4 -4.2 c3 0.4 5 1.6 8 0.8 c3.6 -0.8 5.6 1.2 5.4 4.2 c-0.2 3 -2.4 4.4 -5.6 4 c-3 -0.4 -5 0.6 -7.8 1.4 c-4.4 1.2 -7.4 -2 -7.4 -6.2z" fill="#505250"/><ellipse cx="8" cy="6" rx="4.400" ry="3" fill="#323232" transform="rotate(-18 8 6)"/><rect x="13.4" y="13" width="10.4" height="10.4" rx="1.6" fill="#4a4638" stroke="#3c392e" stroke-width="0.6"/><line x1="18.60" y1="14.46" x2="18.60" y2="21.94" stroke="#8a8a84" stroke-width="1.3"/><line x1="21.84" y1="16.33" x2="15.36" y2="20.07" stroke="#8a8a84" stroke-width="1.3"/><line x1="21.84" y1="20.07" x2="15.36" y2="16.33" stroke="#8a8a84" stroke-width="1.3"/><circle cx="18.6" cy="18.2" r="2.08" fill="none" stroke="#8a8a84" stroke-width="0.9"/></g><g transform="translate(231.3,128.8)"><path d="M1 6.0 c0 -3.4 3.4 -4.6 7.4 -4.2 c3 0.4 5 1.6 8 0.8 c3.6 -0.8 5.6 1.2 5.4 4.2 c-0.2 3 -2.4 4.4 -5.6 4 c-3 -0.4 -5 0.6 -7.8 1.4 c-4.4 1.2 -7.4 -2 -7.4 -6.2z" fill="#505250"/><path d="M1.800 21.400 L7 14 L11.400 15.400 L8.600 22.400 Q4 23.600 1.800 21.400Z" fill="#505250"/><rect x="13.4" y="13" width="10.4" height="10.4" rx="1.6" fill="#4a4638" stroke="#3c392e" stroke-width="0.6"/><line x1="18.60" y1="14.46" x2="18.60" y2="21.94" stroke="#8a8a84" stroke-width="1.3"/><line x1="21.84" y1="16.33" x2="15.36" y2="20.07" stroke="#8a8a84" stroke-width="1.3"/><line x1="21.84" y1="20.07" x2="15.36" y2="16.33" stroke="#8a8a84" stroke-width="1.3"/><circle cx="18.6" cy="18.2" r="2.08" fill="none" stroke="#8a8a84" stroke-width="0.9"/></g><g transform="translate(265.5,128.8)"><path d="M2 6.0 c0 -3.4 3.4 -4.6 7.4 -4.2 c3 0.4 5 1.6 8 0.8 c3.6 -0.8 5.6 1.2 5.4 4.2 c-0.2 3 -2.4 4.4 -5.6 4 c-3 -0.4 -5 0.6 -7.8 1.4 c-4.4 1.2 -7.4 -2 -7.4 -6.2z" fill="#505250"/><ellipse cx="8" cy="6" rx="4.400" ry="3" fill="#4a4a48" stroke="#3a3a3a" stroke-width="0.800" transform="rotate(-18 8 6)"/><rect x="13.4" y="13" width="10.4" height="10.4" rx="1.6" fill="#4a4638" stroke="#3c392e" stroke-width="0.6"/><line x1="18.60" y1="14.46" x2="18.60" y2="21.94" stroke="#8a8a84" stroke-width="1.3"/><line x1="21.84" y1="16.33" x2="15.36" y2="20.07" stroke="#8a8a84" stroke-width="1.3"/><line x1="21.84" y1="20.07" x2="15.36" y2="16.33" stroke="#8a8a84" stroke-width="1.3"/><circle cx="18.6" cy="18.2" r="2.08" fill="none" stroke="#8a8a84" stroke-width="0.9"/></g><g transform="translate(299.7,128.8)"><path d="M2 6.0 c0 -3.4 3.4 -4.6 7.4 -4.2 c3 0.4 5 1.6 8 0.8 c3.6 -0.8 5.6 1.2 5.4 4.2 c-0.2 3 -2.4 4.4 -5.6 4 c-3 -0.4 -5 0.6 -7.8 1.4 c-4.4 1.2 -7.4 -2 -7.4 -6.2z" fill="#505250"/><ellipse cx="8" cy="6" rx="4.600" ry="3.200" fill="#323232" transform="rotate(-18 8 6)"/><rect x="13.6" y="13.8" width="9.6" height="9.6" rx="1.4" fill="#524a4a" stroke="#5a4c4c" stroke-width="0.5"/><path d="M16.0 16.2 L20.8 21.0 M20.8 16.2 L16.0 21.0" stroke="#7c7878" stroke-width="1.8"/></g><g transform="translate(333.3,128.8)"><path d="M1 6.0 c0 -3.4 3.4 -4.6 7.4 -4.2 c3 0.4 5 1.6 8 0.8 c3.6 -0.8 5.6 1.2 5.4 4.2 c-0.2 3 -2.4 4.4 -5.6 4 c-3 -0.4 -5 0.6 -7.8 1.4 c-4.4 1.2 -7.4 -2 -7.4 -6.2z" fill="#505250"/><path d="M1.800 21.400 L7 14 L11.400 15.400 L8.600 22.400 Q4 23.600 1.800 21.400Z" fill="#505250"/><rect x="13.6" y="13.8" width="9.6" height="9.6" rx="1.4" fill="#524a4a" stroke="#5a4c4c" stroke-width="0.5"/><path d="M16.0 16.2 L20.8 21.0 M20.8 16.2 L16.0 21.0" stroke="#7c7878" stroke-width="1.8"/></g><g transform="translate(366.3,128.8)"><path d="M2 6.800000000000001 c0 -3.4 3.4 -4.6 7.4 -4.2 c3 0.4 5 1.6 8 0.8 c3.6 -0.8 5.6 1.2 5.4 4.2 c-0.2 3 -2.4 4.4 -5.6 4 c-3 -0.4 -5 0.6 -7.8 1.4 c-4.4 1.2 -7.4 -2 -7.4 -6.2z" fill="#505250"/><path d="M3.400 11 L10 11.400 L7.800 20.600 Q6.400 22.600 5 20.600Z" fill="#57554a"/></g><g transform="translate(401.0,128.8)"><path d="M4.400 16.400 C4 10.400 11 9 14.400 5 C17.600 1.400 22.400 4.400 20.600 9 C19 13.400 15 14.400 12.600 18.400 C10 22.600 4.800 21.400 4.400 16.400Z" fill="#505250" stroke="#5d5747" stroke-width="1.400"/></g><g transform="translate(434.7,128.8)"><path d="M3 2.600 L9.400 15.600 L15.400 4.400 L20.600 4.400" fill="none" stroke="#555" stroke-width="1.100"/><rect x="1.7" y="1.3" width="2.600" height="2.600" fill="#666"/><rect x="8.1" y="14.299999999999999" width="2.600" height="2.600" fill="#666"/><rect x="14.1" y="3.1000000000000005" width="2.600" height="2.600" fill="#666"/><rect x="19.3" y="3.1000000000000005" width="2.600" height="2.600" fill="#666"/><rect x="13.400" y="13.400" width="10" height="10" rx="1.400" fill="#4a4e52"/><path d="M15.600 18 a3 3 0 0 1 5.600 -1 M21.600 19 a3 3 0 0 1 -5.600 1" fill="none" stroke="#888" stroke-width="1.200"/></g><g transform="translate(468.8,128.8)"><path d="M1.600 11 H23 M10.600 0.800 V20.600 M16.400 8 V24" stroke="#4f4f4d" stroke-width="1.300"/><rect x="16.800" y="1.400" width="6" height="6" rx="1" fill="#4a4638"/><rect x="1.600" y="17.400" width="6" height="6" rx="1" fill="#524a4a"/><path d="M3 18.800 l3.200 3.200 M6.200 18.800 l-3.200 3.200" stroke="#777" stroke-width="1"/></g><g transform="translate(503.0,128.8)"><ellipse cx="7" cy="7.400" rx="5" ry="5.600" fill="#505250"/><ellipse cx="17.600" cy="7.400" rx="5" ry="5.600" fill="#505250"/><path d="M15.400 0.600 L11 16 M9.400 1.600 L13.400 16" stroke="#6c6c6c" stroke-width="0.9"/><ellipse cx="9.400" cy="19.400" rx="2" ry="3.200" fill="none" stroke="#503030" stroke-width="0.800" transform="rotate(25 9.400 19.400)"/><ellipse cx="15.400" cy="19" rx="2" ry="3.200" fill="none" stroke="#503030" stroke-width="0.800" transform="rotate(-30 15.400 19)"/></g><g transform="translate(536.8,128.8)"><ellipse cx="7" cy="7.400" rx="5" ry="5.600" fill="#505250"/><ellipse cx="17.600" cy="7.400" rx="5" ry="5.600" fill="#505250"/><path d="M15.400 0.600 L11 16 M9.400 1.600 L13.400 16" stroke="#6c6c6c" stroke-width="0.9"/><ellipse cx="9.400" cy="19.400" rx="2" ry="3.200" fill="none" stroke="#503030" stroke-width="0.800" transform="rotate(25 9.400 19.400)"/><ellipse cx="15.400" cy="19" rx="2" ry="3.200" fill="none" stroke="#503030" stroke-width="0.800" transform="rotate(-30 15.400 19)"/></g><g transform="translate(570.5,128.8)"><ellipse cx="7.600" cy="7.600" rx="5.600" ry="6" fill="#505250"/><ellipse cx="17" cy="7.600" rx="5.600" ry="6" fill="#4a4c4a"/><path d="M10 4 h3 M10 6.400 h3 M10 8.800 h3 M10 11.200 h3" stroke="#888" stroke-width="0.900"/><path d="M5 13 L13 21" stroke="#3a3a3a" stroke-width="0.700"/></g><g transform="translate(604.7,128.8)"><rect x="2.2" y="2" width="8.600" height="5.400" fill="#5a5a5a"/><path d="M4.6 5.6 l3.600 -2" stroke="#2c2c2c" stroke-width="0.700"/><rect x="2.2" y="9.4" width="8.600" height="5.400" fill="#5a5a5a"/><path d="M4.6 13.0 l3.600 -2" stroke="#2c2c2c" stroke-width="0.700"/><rect x="2.2" y="16.8" width="8.600" height="5.400" fill="#5a5a5a"/><path d="M4.6 20.400000000000002 l3.600 -2" stroke="#2c2c2c" stroke-width="0.700"/><rect x="12.8" y="2" width="8.600" height="5.400" fill="#5a5a5a"/><path d="M15.200000000000001 5.6 l3.600 -2" stroke="#2c2c2c" stroke-width="0.700"/><rect x="12.8" y="9.4" width="8.600" height="5.400" fill="#5a5a5a"/><path d="M15.200000000000001 13.0 l3.600 -2" stroke="#2c2c2c" stroke-width="0.700"/><rect x="12.8" y="16.8" width="8.600" height="5.400" fill="#5a5a5a"/><path d="M15.200000000000001 20.400000000000002 l3.600 -2" stroke="#2c2c2c" stroke-width="0.700"/></g><g transform="translate(640.0,128.8)"><path d="M7.400 1.600 L14.600 6 L7.400 10.400Z" fill="#505250"/><path d="M2 22.600 L7.400 12.600 L12.800 22.600Z" fill="none" stroke="#585858" stroke-width="0.900"/><path d="M3.600 4 Q-1 11 3 17" fill="none" stroke="#3a3a3a" stroke-width="0.700"/></g><path d="M672.3 138.4 h5.4 l-1.7 3 v0.9 h-2 v-0.9z" fill="#bbb"/><g transform="translate(688.7,128.8)"><path d="M2 6.4 c0 -3.4 3.4 -4.6 7.4 -4.2 c3 0.4 5 1.6 8 0.8 c3.6 -0.8 5.6 1.2 5.4 4.2 c-0.2 3 -2.4 4.4 -5.6 4 c-3 -0.4 -5 0.6 -7.8 1.4 c-4.4 1.2 -7.4 -2 -7.4 -6.2z" fill="#505250"/><path d="M1.800 21.400 L6 14.400 L11.400 15.400 L8.600 21.600 Q4 23.600 1.800 21.400Z" fill="#57554a"/><path d="M9 11.400 L20.600 23" stroke="#2a2a2a" stroke-width="0.700"/></g><rect x="724.95" y="135.3" width="1.5" height="11" fill="#5a5a5a"/><g transform="translate(731.5,128.8)"><path d="M1.400 22.600 V4 Q2.400 0.800 4.400 4 Q7 14 9.400 20 Q11 22.600 14 22.600Z" fill="#4d5046"/><path d="M8.600 22.600 L10.600 3 Q11.400 0.400 12.200 3 Q13.600 14 16 20 Q17.600 22.600 22.600 22.600Z" fill="#5c5c5c"/><path d="M2.600 14 V22.600 M15.600 14 V22.600" stroke="#503030" stroke-width="0.700"/></g><g transform="translate(765.7,128.8)"><path d="M1.400 22.600 V4 Q2.400 0.800 4.400 4 Q7 14 9.400 20 Q11 22.600 14 22.600Z" fill="#4d5046"/><path d="M8.600 22.600 L10.600 3 Q11.400 0.400 12.200 3 Q13.600 14 16 20 Q17.600 22.600 22.600 22.600Z" fill="#5c5c5c"/><path d="M2.600 14 V22.600 M15.600 14 V22.600" stroke="#503030" stroke-width="0.700"/><path d="M1 11.600 l4.400 -3.600 v2.400 h13.200 v-2.400 l4.400 3.600 l-4.400 3.600 v-2.400 h-13.200 v2.400z" fill="#5a5a5a"/></g><g transform="translate(799.8,128.8)"><path d="M1.400 22.600 V4 Q2.400 0.800 4.400 4 Q7 14 9.400 20 Q11 22.600 14 22.600Z" fill="#4d5046"/><path d="M8.600 22.600 L10.600 3 Q11.400 0.400 12.200 3 Q13.600 14 16 20 Q17.600 22.600 22.600 22.600Z" fill="#5c5c5c"/></g><g transform="translate(833.7,128.8)"><path d="M1.400 22.600 V4 Q2.400 0.800 4.400 4 Q7 14 9.400 20 Q11 22.600 14 22.600Z" fill="#4d5046"/><path d="M8.600 22.600 L10.600 3 Q11.400 0.400 12.200 3 Q13.600 14 16 20 Q17.600 22.600 22.600 22.600Z" fill="#5c5c5c"/><path d="M1 11.600 l4.400 -3.600 v2.400 h13.200 v-2.400 l4.400 3.600 l-4.400 3.600 v-2.400 h-13.200 v2.400z" fill="#5a5a5a"/></g><g transform="translate(868.0,128.8)"><circle cx="11" cy="11.600" r="5.800" fill="#4d4838"/><line x1="18.6" y1="11.6" x2="21.6" y2="11.6" stroke="#4d4838" stroke-width="1.300"/><line x1="16.4" y1="17.0" x2="18.5" y2="19.1" stroke="#4d4838" stroke-width="1.300"/><line x1="11.0" y1="19.2" x2="11.0" y2="22.2" stroke="#4d4838" stroke-width="1.300"/><line x1="5.6" y1="17.0" x2="3.5" y2="19.1" stroke="#4d4838" stroke-width="1.300"/><line x1="3.4" y1="11.6" x2="0.4" y2="11.6" stroke="#4d4838" stroke-width="1.300"/><line x1="5.6" y1="6.2" x2="3.5" y2="4.1" stroke="#4d4838" stroke-width="1.300"/><line x1="11.0" y1="4.0" x2="11.0" y2="1.0" stroke="#4d4838" stroke-width="1.300"/><line x1="16.4" y1="6.2" x2="18.5" y2="4.1" stroke="#4d4838" stroke-width="1.300"/><rect x="13" y="13.2" width="10.800" height="10.400" rx="1.400" fill="#3d4236" stroke="#454a3e" stroke-width="0.500"/><path d="M15.2 21.2 L18.4 15.2 L21.6 21.2Z" fill="#8c8c8c"/></g><g transform="translate(902.0,128.8)"><circle cx="11" cy="11.600" r="5.800" fill="#4d4838"/><line x1="18.6" y1="11.6" x2="21.6" y2="11.6" stroke="#4d4838" stroke-width="1.300"/><line x1="16.4" y1="17.0" x2="18.5" y2="19.1" stroke="#4d4838" stroke-width="1.300"/><line x1="11.0" y1="19.2" x2="11.0" y2="22.2" stroke="#4d4838" stroke-width="1.300"/><line x1="5.6" y1="17.0" x2="3.5" y2="19.1" stroke="#4d4838" stroke-width="1.300"/><line x1="3.4" y1="11.6" x2="0.4" y2="11.6" stroke="#4d4838" stroke-width="1.300"/><line x1="5.6" y1="6.2" x2="3.5" y2="4.1" stroke="#4d4838" stroke-width="1.300"/><line x1="11.0" y1="4.0" x2="11.0" y2="1.0" stroke="#4d4838" stroke-width="1.300"/><line x1="16.4" y1="6.2" x2="18.5" y2="4.1" stroke="#4d4838" stroke-width="1.300"/><rect x="13" y="13.2" width="10.800" height="10.400" rx="1.400" fill="#3d4236" stroke="#454a3e" stroke-width="0.500"/><path d="M15.2 15.6 L18.4 21.6 L21.6 15.6Z" fill="#8c8c8c"/></g><g transform="translate(937.0,128.8)"><circle cx="10.600" cy="11" r="8.400" fill="none" stroke="#424242" stroke-width="0.900"/><path d="M16 4.600 A8.400 8.400 0 1 0 7.600 18.800Z" fill="#3f3f3f"/><rect x="13" y="13.2" width="10.800" height="10.400" rx="1.400" fill="#3d4236" stroke="#454a3e" stroke-width="0.500"/><path d="M15.2 21.2 L18.4 15.2 L21.6 21.2Z" fill="#8c8c8c"/></g><g transform="translate(970.5,128.8)"><circle cx="10.600" cy="11" r="8.400" fill="none" stroke="#424242" stroke-width="0.900"/><path d="M16 4.600 A8.400 8.400 0 1 0 7.600 18.800Z" fill="#3f3f3f"/><rect x="13" y="13.2" width="10.800" height="10.400" rx="1.400" fill="#3d4236" stroke="#454a3e" stroke-width="0.500"/><path d="M15.2 15.6 L18.4 21.6 L21.6 15.6Z" fill="#8c8c8c"/></g><g transform="translate(1004.7,128.8)"><path d="M3.400 5 Q5.600 2 7.600 6 L10.600 16 Q11.400 20 10.600 16 L14.600 3" fill="none" stroke="#424242" stroke-width="1.200"/><path d="M10.600 15 V20" stroke="#424242" stroke-width="1.400"/><rect x="13" y="13.2" width="10.800" height="10.400" rx="1.400" fill="#3d4236" stroke="#454a3e" stroke-width="0.500"/><path d="M15.2 21.2 L18.4 15.2 L21.6 21.2Z" fill="#8c8c8c"/></g><g transform="translate(1039.0,128.8)"><path d="M3.400 5 Q5.600 2 7.600 6 L10.600 16 Q11.400 20 10.600 16 L14.600 3" fill="none" stroke="#424242" stroke-width="1.200"/><path d="M10.600 15 V20" stroke="#424242" stroke-width="1.400"/><rect x="13" y="13.2" width="10.800" height="10.400" rx="1.400" fill="#3d4236" stroke="#454a3e" stroke-width="0.500"/><path d="M15.2 15.6 L18.4 21.6 L21.6 15.6Z" fill="#8c8c8c"/></g><rect x="4.25" y="173.3" width="1.5" height="11" fill="#5a5a5a"/><g transform="translate(11.3,166.8)"><path d="M2.800 21.600 Q3.400 6 19.600 3" fill="none" stroke="#545652" stroke-width="2.400"/><path d="M2.800 21.600 Q8 9.400 19.600 3" fill="none" stroke="#545652" stroke-width="1.300"/><rect x="1.4" y="20.0" width="2.800" height="2.800" fill="#666864"/><rect x="18.200000000000003" y="1.8000000000000003" width="2.800" height="2.800" fill="#666864"/><rect x="8.2" y="8.6" width="2.800" height="2.800" fill="#666864"/><rect x="13" y="13" width="10.6" height="10.6" rx="1.6" fill="#4a4638" stroke="#3c392e" stroke-width="0.6"/><line x1="18.30" y1="14.48" x2="18.30" y2="22.12" stroke="#8a8a84" stroke-width="1.3"/><line x1="21.60" y1="16.39" x2="15.00" y2="20.21" stroke="#8a8a84" stroke-width="1.3"/><line x1="21.60" y1="20.21" x2="15.00" y2="16.39" stroke="#8a8a84" stroke-width="1.3"/><circle cx="18.3" cy="18.3" r="2.12" fill="none" stroke="#8a8a84" stroke-width="0.9"/></g><g transform="translate(44.7,166.8)"><circle cx="10.400" cy="10.400" r="7.800" fill="none" stroke="#545652" stroke-width="3"/><rect x="9.0" y="9.0" width="2.800" height="2.800" fill="#666864"/><rect x="3.1999999999999997" y="14.999999999999998" width="2.800" height="2.800" fill="#666864"/><rect x="13" y="13" width="10.6" height="10.6" rx="1.6" fill="#4a4638" stroke="#3c392e" stroke-width="0.6"/><line x1="18.30" y1="14.48" x2="18.30" y2="22.12" stroke="#8a8a84" stroke-width="1.3"/><line x1="21.60" y1="16.39" x2="15.00" y2="20.21" stroke="#8a8a84" stroke-width="1.3"/><line x1="21.60" y1="20.21" x2="15.00" y2="16.39" stroke="#8a8a84" stroke-width="1.3"/><circle cx="18.3" cy="18.3" r="2.12" fill="none" stroke="#8a8a84" stroke-width="0.9"/></g><path d="M78.3 177.2 h5.4 l-1.7 3 v0.9 h-2 v-0.9z" fill="#aaa"/><g transform="translate(94.7,166.8)"><ellipse cx="9.600" cy="9.600" rx="8.400" ry="5.400" fill="none" stroke="#545652" stroke-width="2.600"/><rect x="8.2" y="8.2" width="2.800" height="2.800" fill="#666864"/><rect x="17.200000000000003" y="1.0" width="2.800" height="2.800" fill="#666864"/><rect x="13" y="13" width="10.6" height="10.6" rx="1.6" fill="#4a4638" stroke="#3c392e" stroke-width="0.6"/><line x1="18.30" y1="14.48" x2="18.30" y2="22.12" stroke="#8a8a84" stroke-width="1.3"/><line x1="21.60" y1="16.39" x2="15.00" y2="20.21" stroke="#8a8a84" stroke-width="1.3"/><line x1="21.60" y1="20.21" x2="15.00" y2="16.39" stroke="#8a8a84" stroke-width="1.3"/><circle cx="18.3" cy="18.3" r="2.12" fill="none" stroke="#8a8a84" stroke-width="0.9"/></g><path d="M128.3 177.2 h5.4 l-1.7 3 v0.9 h-2 v-0.9z" fill="#aaa"/><g transform="translate(144.7,166.8)"><rect x="3" y="3" width="17.600" height="13.600" fill="none" stroke="#545652" stroke-width="3"/><rect x="1.6" y="1.6" width="2.800" height="2.800" fill="#666864"/><rect x="19.200000000000003" y="1.6" width="2.800" height="2.800" fill="#666864"/><rect x="1.6" y="15.200000000000001" width="2.800" height="2.800" fill="#666864"/><rect x="19.200000000000003" y="15.200000000000001" width="2.800" height="2.800" fill="#666864"/><rect x="8" y="12" width="10.6" height="10.6" rx="1.6" fill="#4a4638" stroke="#3c392e" stroke-width="0.6"/><line x1="13.30" y1="13.48" x2="13.30" y2="21.12" stroke="#8a8a84" stroke-width="1.3"/><line x1="16.60" y1="15.39" x2="10.00" y2="19.21" stroke="#8a8a84" stroke-width="1.3"/><line x1="16.60" y1="19.21" x2="10.00" y2="15.39" stroke="#8a8a84" stroke-width="1.3"/><circle cx="13.3" cy="17.3" r="2.12" fill="none" stroke="#8a8a84" stroke-width="0.9"/></g><path d="M178.3 177.2 h5.4 l-1.7 3 v0.9 h-2 v-0.9z" fill="#aaa"/><g transform="translate(194.7,166.8)"><path d="M9.400 2.600 L19.600 5.400 L19.600 14 L10.600 20 L3.600 12.400Z" fill="none" stroke="#545652" stroke-width="3" stroke-linejoin="round"/><rect x="8.0" y="1.2000000000000002" width="2.800" height="2.800" fill="#666864"/><rect x="2.2" y="11.0" width="2.800" height="2.800" fill="#666864"/><rect x="13" y="13" width="10.6" height="10.6" rx="1.6" fill="#4a4638" stroke="#3c392e" stroke-width="0.6"/><line x1="18.30" y1="14.48" x2="18.30" y2="22.12" stroke="#8a8a84" stroke-width="1.3"/><line x1="21.60" y1="16.39" x2="15.00" y2="20.21" stroke="#8a8a84" stroke-width="1.3"/><line x1="21.60" y1="20.21" x2="15.00" y2="16.39" stroke="#8a8a84" stroke-width="1.3"/><circle cx="18.3" cy="18.3" r="2.12" fill="none" stroke="#8a8a84" stroke-width="0.9"/></g><path d="M228.3 177.2 h5.4 l-1.7 3 v0.9 h-2 v-0.9z" fill="#aaa"/><rect x="247.05" y="173.3" width="1.5" height="11" fill="#5a5a5a"/><g transform="translate(254.0,166.8)"><rect x="0" y="0" width="24" height="24" fill="#fff"/><circle cx="12" cy="12" r="10" fill="none" stroke="#8c2b33" stroke-width="1.400"/><circle cx="12" cy="12" r="7.600" fill="none" stroke="#8c2b33" stroke-width="0.800"/><circle cx="12" cy="12" r="5" fill="none" stroke="#8c2b33" stroke-width="0.600"/><g transform="rotate(-20 12 12)"><rect x="1" y="8.600" width="22" height="6.800" fill="#fff" stroke="#8c2b33" stroke-width="1.200"/><text x="3" y="14.200" font-family="Liberation Sans,sans-serif" font-weight="bold" font-size="6.500" fill="#8c2b33" letter-spacing="0.600">TEXT</text></g></g><rect x="290.05" y="173.3" width="1.5" height="11" fill="#5a5a5a"/><g transform="translate(296.7,166.8)"><rect x="0" y="0" width="24" height="24" fill="#6aa84f"/><path d="M0 0 H24 L0 20Z" fill="#8cc472" opacity="0.700"/><circle cx="13.600" cy="10" r="6.200" fill="#a8d692" fill-opacity="0.600" stroke="#fff" stroke-width="2.200"/><path d="M9.200 14.600 L3.600 20.400" stroke="#f2f2f2" stroke-width="3" stroke-linecap="round"/></g><g transform="translate(330.3,166.8)"><rect x="0.600" y="0.600" width="21" height="23" fill="#f5cf3a"/><path d="M8 0.600 H13 Q11 6 14 10 Q18 14 16 23.600 H11 Q13 16 10 12 Q7 7 8 0.600Z" fill="#3f7fd6"/><rect x="2" y="9" width="3.600" height="7" fill="#b0304a"/><rect x="6" y="10" width="3" height="4" fill="#2f8f7f"/><path d="M1 3 l5 -2 v4z" fill="#2f9f4f"/><path d="M14 17 h6 v4 h-6z" fill="#e8e0a0"/><path d="M22.600 0.600 L24 2.400 L13.400 14.400 L11.600 13Z" fill="#b5561f" stroke="#7a3410" stroke-width="0.500"/><path d="M11.600 13 L13.400 14.400 L5 21Z" fill="#ddd" stroke="#444" stroke-width="0.400"/></g><rect x="366.75" y="173.3" width="1.5" height="11" fill="#5a5a5a"/><g transform="translate(373.8,166.8)"><path d="M8.600 1 L16.600 24 M8 3 L17.400 11.600" stroke="#5a5138" stroke-width="0.800" fill="none"/></g><rect x="409.75" y="173.3" width="1.5" height="11" fill="#5a5a5a"/><g transform="translate(416.3,166.8)"><path d="M16 1.800 Q5.600 10.400 12.600 17.600" fill="none" stroke="#a3b41e" stroke-width="4.400"/><path d="M12 6.600 Q20.400 13.600 12.400 23" fill="none" stroke="#b9cc34" stroke-width="4.400"/></g><g transform="translate(1.6,2.6)"><circle cx="7.600" cy="7.400" r="5.600" fill="none" stroke="#7fb03a" stroke-width="3.600"/><path d="M7.600 7.600 L15 15" stroke="#5e9a2c" stroke-width="3.400" stroke-linecap="round"/><path d="M6.400 6.400 L10.400 10.400" stroke="#f39a2c" stroke-width="2.200" stroke-linecap="round"/><path d="M9.600 9.600 L13.600 13.600" stroke="#9acb5a" stroke-width="1.400"/></g><path d="M1245 10.500 h10" stroke="#1a1a1a" stroke-width="1.100"/><rect x="1290.500" y="7" width="7.500" height="7.500" rx="1.600" fill="none" stroke="#1a1a1a" stroke-width="1.100"/><path d="M1292.800 5 h4.200 a2.600 2.600 0 0 1 2.600 2.600 v4.200" fill="none" stroke="#1a1a1a" stroke-width="1.100"/><path d="M1336.200 5 l9.800 9.800 M1346 5 l-9.800 9.800" stroke="#1a1a1a" stroke-width="1.100"/><rect x="217.6" y="202.5" width="7.600" height="7.600" fill="none" stroke="#555" stroke-width="1" stroke-dasharray="2 1"/><path d="M219.6 208.1 l3.600 -3.600 m-2.400 0 h2.400 v2.400" stroke="#5a5a5a" stroke-width="0.900" fill="none"/><rect x="217.6" y="475.5" width="7.600" height="7.600" fill="none" stroke="#555" stroke-width="1" stroke-dasharray="2 1"/><path d="M219.6 481.1 l3.600 -3.600 m-2.400 0 h2.400 v2.400" stroke="#5a5a5a" stroke-width="0.900" fill="none"/><rect x="1354.4" y="202.5" width="7.600" height="7.600" fill="none" stroke="#555" stroke-width="1" stroke-dasharray="2 1"/><path d="M1356.4 208.1 l3.600 -3.600 m-2.400 0 h2.400 v2.400" stroke="#5a5a5a" stroke-width="0.900" fill="none"/><g transform="translate(6.0,223.8)"><rect x="2" y="2" width="11.600" height="10.600" fill="#f0f0f0" stroke="#cfcfcf" stroke-width="0.600"/><rect x="9.800" y="9.800" width="6" height="6" rx="1" fill="#5aa469"/><circle cx="12.800" cy="12.800" r="1.500" fill="#cfe8d2"/></g><g transform="translate(33.0,223.8)"><path d="M1.400 7.600 a6.400 5.800 0 0 1 10.600 -4 l1.800 -2 l0.600 6.400 h-6.400 l2 -2.200 a3.600 3.200 0 0 0 -5.400 1.800z" fill="#4f8fd8" stroke="#2c5fa4" stroke-width="0.500"/><path d="M14.600 8.600 a6.400 5.800 0 0 1 -10.600 4 l-1.800 2 l-0.600 -6.400 h6.400 l-2 2.200 a3.600 3.200 0 0 0 5.400 -1.800z" fill="#4f8fd8" stroke="#2c5fa4" stroke-width="0.500"/></g><g transform="translate(59.0,223.8)"><path d="M1.800 3.600 H14.200 L9.600 9.400 V15.200 L6.400 13.400 V9.400Z" fill="#5b93d4" stroke="#2f5d9c" stroke-width="0.500"/><rect x="1.600" y="1.400" width="12.800" height="2.200" fill="#f4d935"/></g><g transform="translate(85.0,223.8)"><path d="M1.600 2.400 H6 M1.600 2.400 V13.600 H6 M1.600 8 H4" stroke="#d0d0d0" stroke-width="0.900" fill="none"/><rect x="4" y="6.400" width="3" height="3" fill="#f39a1c"/><rect x="4" y="11.400" width="3" height="3" fill="#f39a1c"/><path d="M11.600 1 L15.600 5.600 H13 V14.600 H10.200 V5.600 H7.600Z" fill="#5b93d4"/></g><g transform="translate(111.0,223.8)"><circle cx="8" cy="8" r="6.400" fill="#5b8ccc" stroke="#8fb3e4" stroke-width="0.600"/><text x="6" y="12" font-family="Liberation Serif,serif" font-style="italic" font-weight="bold" font-size="11" fill="#fff">i</text></g><g transform="translate(22.0,252.2)"><path d="M8 0.400 L10.300 5.700 L16 6.200 L11.700 10 L13 15.600 L8 12.600 L3 15.600 L4.300 10 L0 6.200 L5.700 5.700Z" fill="#f5e23a" stroke="#d9b800" stroke-width="0.500"/></g><g transform="translate(22.0,270.7)"><path d="M1.600 1.400 h2 v11.600 h10.800 v2 h-10.800 c-1.400 0 -2 -0.800 -2 -1.800z" fill="#c4c4c4"/><rect x="3.400" y="1.400" width="11" height="11.600" fill="#e8e8e8"/><path d="M8.400 1.400 H11 V7.400 L9.700 6 L8.400 7.400Z" fill="#5a8fd2"/></g><g transform="translate(22.0,288.7)"><path d="M1.200 2.400 H6.400 L7.800 4 H14.800 V14.200 H1.200Z" fill="#b9dc6c" stroke="#8fbf3a" stroke-width="0.500"/><path d="M1.400 6 L14.600 13.600 M1.400 12 L9 5" stroke="#eef8d8" stroke-width="0.800"/><path d="M7.600 6 l4.600 -1.600 l1.600 3 l-3.400 2.200z" fill="#1f8f2f"/></g><g transform="translate(22.0,306.7)"><path d="M1.200 2.400 H6.400 L7.800 4 H14.800 V14.200 H1.200Z" fill="#f2f2f2" stroke="#cfcfcf" stroke-width="0.500"/><path d="M4.600 9.400 L8 6.200 L11.400 9.400 M5.600 8.800 V12.600 H10.400 V8.800" fill="none" stroke="#222" stroke-width="0.900"/></g><g transform="translate(22.0,324.7)"><path d="M1.200 2.400 H6.400 L7.800 4 H14.800 V14.200 H1.200Z" fill="#f2f2f2" stroke="#cfcfcf" stroke-width="0.500"/></g><g transform="translate(22.0,342.7)"><path d="M0.800 6.200 L8 9.800 V15.400 L0.800 11.600Z" fill="#e9be24"/><path d="M8 9.800 L15.400 6 V11.600 L8 15.400Z" fill="#f9e36a"/><path d="M0.800 6.200 L8 3.400 L15.400 6 L8 9.800Z" fill="#d2a610"/><circle cx="8.200" cy="5.200" r="4.400" fill="#7da7dc" stroke="#2d4f86" stroke-width="0.500"/><path d="M5.400 4 q1.400 -2 2.800 -0.800 q0.400 1.400 -0.800 2 q-1.400 1 -2 -1.200z M9 5.400 q1.600 -1.400 3 -0.200 q0 2 -1.400 2.600 q-1.400 -0.400 -1.600 -2.400z" fill="#1f3f73"/></g><g transform="translate(22.0,360.7)"><path d="M0.800 15.400 C2 8.400 6 2.600 15.400 0.800 C15.400 5.600 12 10 5.200 10.600 C3.800 12 2.400 13.600 1.400 15.600Z" fill="#7fa9dc" stroke="#34639f" stroke-width="0.500"/><path d="M1.400 14.600 C4 8.600 8 4.600 14 2" fill="none" stroke="#dbe8f7" stroke-width="0.600"/></g><g transform="translate(22.0,378.7)"><path d="M3 1.400 Q8 -0.400 12.600 1.600 Q15.600 3.400 14.600 7 Q14 9.600 12 9.800 Q11.400 12.600 11.600 15 Q9.400 16 8.600 13.600 L8.400 9.400 Q6 9.800 5.400 7.600 Q3 8.400 1.600 6 Q0.400 3 3 1.400Z" fill="#6c9bd0" stroke="#3a679f" stroke-width="0.500"/><path d="M6.400 3 Q5 5.400 6.400 7.600 M10.600 3.400 Q12 5 10.800 7" fill="none" stroke="#2c2c2c" stroke-width="0.700"/></g><g transform="translate(22.0,396.7)"><rect x="1" y="1" width="14" height="14" fill="none" stroke="#6c9bd0" stroke-width="0.900" stroke-dasharray="1 1.200"/><rect x="3.400" y="3.400" width="9.200" height="9.200" fill="#6c9bd0"/></g><g transform="translate(22.0,414.7)"><path d="M0.800 1 Q9 2.400 15.600 8.200 Q9 9.600 0.800 15.200 Q6.400 8 0.800 1Z" fill="#6c9bd0"/><path d="M5.600 2.600 Q9 8 5.600 12 M9 4.200 Q11.400 8 9 10" fill="none" stroke="#3a679f" stroke-width="0.700"/></g><g transform="translate(22.0,432.7)"><rect x="1" y="3.200" width="14" height="9.600" rx="3.400" fill="#6c9bd0" stroke="#3a679f" stroke-width="0.700"/></g><clipPath id="bclip"><rect x="2" y="449" width="213" height="14"/></clipPath><g clip-path="url(#bclip)"><g transform="translate(22.0,451.0)"><circle cx="8" cy="8" r="7.400" fill="#cfe0f6" stroke="#3a5f98" stroke-width="0.600"/><path d="M3.600 4 q2.400 -2.600 4.400 -1.200 q0.600 2.400 -1.200 3.400 q-2.200 1.600 -3.200 -2.200z M9 7.600 q2.600 -2 4.600 -0.400 q0.200 3.400 -2.200 4.400 q-2 -0.600 -2.400 -4z M4 10 q1.800 -0.400 2.400 1.600 q-0.800 1.600 -2.400 -1.600z M10 2.400 q1.400 -0.200 2 1 q-1 0.800 -2 -1z" fill="#27457a"/></g></g><path d="M8.399999999999999 275.7 L13.2 278.7 L8.399999999999999 281.7Z" fill="#5e5e5e"/><path d="M8.399999999999999 293.7 L13.2 296.7 L8.399999999999999 299.7Z" fill="#5e5e5e"/><path d="M8.399999999999999 311.7 L13.2 314.7 L8.399999999999999 317.7Z" fill="#5e5e5e"/><path d="M8.399999999999999 329.7 L13.2 332.7 L8.399999999999999 335.7Z" fill="#5e5e5e"/><g transform="translate(7.0,496.8)"><path d="M9.400 8.400 L15 1.800" stroke="#e8a21c" stroke-width="1.600" stroke-linecap="round"/><path d="M1 9 L5.400 4.400 L8 7 L3.600 12.600Z" fill="#2f5fa8"/><path d="M2 11.600 L6.400 6 L9.400 8.400 L5 14Z" fill="#f2d330"/><path d="M3.600 13 L7.600 8 L10.600 10.400 L6.600 15.400Z" fill="#d9303a"/><path d="M6.600 8.600 L10.600 6.600 L12.600 9.600 L9.400 13Z" fill="#d9b36a" stroke="#8a6d3a" stroke-width="0.400"/></g><g transform="translate(33.0,496.8)"><path d="M1.600 8.600 V15 H8.600" fill="none" stroke="#8a8a8a" stroke-width="0.800"/><rect x="5.600" y="3" width="9" height="9" fill="#d8d8d8"/><rect x="3.600" y="5" width="9" height="9" fill="#f2f2f2" stroke="#bdbdbd" stroke-width="0.500"/><path d="M7.200 11.400 V3 a1.400 1.400 0 0 1 2.800 0 V11 a0.700 0.700 0 0 1 -1.400 0 V4.600" fill="none" stroke="#3f76c2" stroke-width="0.800"/><rect x="10" y="10" width="6" height="6" rx="1" fill="#5aa469"/><circle cx="13" cy="13" r="1.500" fill="#cfe8d2"/></g><g transform="translate(59.4,499.4)"><path d="M0.800 5.600 Q8.600 -2.400 16.400 5.600 Q8.600 12.400 0.800 5.600Z" fill="#e8e8e8" stroke="#9a9a9a" stroke-width="0.700"/><circle cx="8.600" cy="5.200" r="3.400" fill="#5a8fd2"/><circle cx="8.600" cy="5.200" r="1.400" fill="#1a2a4a"/><path d="M1 2.600 Q8.600 -3 16.400 2.400" fill="none" stroke="#8a8a8a" stroke-width="0.600"/><path d="M12.400 8.600 h4.600 l-1.400 2.400 v0.800 h-1.800 v-0.800z" fill="#b0b0b0"/></g><g transform="translate(86.0,496.8)"><path d="M0.800 3.600 H13.200 L8.600 9.400 V15.200 L5.400 13.400 V9.400Z" fill="#5b93d4" stroke="#2f5d9c" stroke-width="0.500"/><rect x="0.600" y="1.400" width="12.800" height="2.200" fill="#f4d935"/><path d="M11.600 10.600 h4.400 l-1.400 2.400 v0.800 h-1.600 v-0.800z" fill="#b0b0b0"/></g><g transform="translate(112.0,496.8)"><text x="0.400" y="11" font-family="Liberation Serif,serif" font-size="15" fill="#7b2d8e">ε</text><rect x="8" y="9" width="7" height="6.400" fill="#c8c8c8"/><path d="M8 15.400 l1.600 -4 h3.800 l1.600 4z" fill="#eee"/></g><path d="M136.3 503.2 h5.4 l-1.7 3 v0.9 h-2 v-0.9z" fill="#8a8a8a"/><g transform="translate(153.5,496.8)"><path d="M1.600 2.400 H6 M1.600 2.400 V13.600 H6 M1.600 8 H4" stroke="#d0d0d0" stroke-width="0.900" fill="none"/><rect x="4" y="6.400" width="3" height="3" fill="#f39a1c"/><rect x="4" y="11.400" width="3" height="3" fill="#f39a1c"/><path d="M11.600 15 L15.600 10.400 H13 V1.400 H10.200 V10.400 H7.600Z" fill="#5b93d4"/></g><g transform="translate(179.5,496.8)"><path d="M1.600 2.400 H6 M1.600 2.400 V13.600 H6 M1.600 8 H4" stroke="#d0d0d0" stroke-width="0.900" fill="none"/><rect x="4" y="6.400" width="3" height="3" fill="#f39a1c"/><rect x="4" y="11.400" width="3" height="3" fill="#f39a1c"/><path d="M11.600 1 L15.600 5.600 H13 V14.600 H10.200 V5.600 H7.600Z" fill="#5b93d4"/></g><g transform="translate(205.0,496.8)"><rect x="1.400" y="1.400" width="11.600" height="10.600" fill="#f0f0f0" stroke="#cfcfcf" stroke-width="0.600"/><rect x="9.600" y="10" width="6" height="5.400" rx="1" fill="#e8394a"/><path d="M11 12.700 h3.200" stroke="#fff" stroke-width="1.200"/></g><path d="M8.8 532.6 H15.2 L12 538Z" fill="#6a6a6a"/><g transform="translate(25,529.4)"><path d="M0.800 5.5 Q9.0 -4.62 17.2 5.5 Q9.0 15.62 0.800 5.5Z" fill="none" stroke="#ffffff" stroke-width="1.500"/><circle cx="9.4" cy="4.9" r="3.96" fill="#ffffff"/><circle cx="8.0" cy="3.7" r="1.500" fill="#1e1e1e"/></g><g transform="translate(49.0,526.5)"><path d="M1.600 8.600 V15 H8.600" fill="none" stroke="#8a8a8a" stroke-width="0.800"/><rect x="5.600" y="3" width="9" height="9" fill="#d8d8d8"/><rect x="3.600" y="5" width="9" height="9" fill="#f2f2f2" stroke="#bdbdbd" stroke-width="0.500"/><path d="M7.200 11.400 V3 a1.400 1.400 0 0 1 2.800 0 V11 a0.700 0.700 0 0 1 -1.400 0 V4.600" fill="none" stroke="#3f76c2" stroke-width="0.800"/></g><g transform="translate(45,553.4)"><path d="M0.800 5.5 Q9.0 -4.62 17.2 5.5 Q9.0 15.62 0.800 5.5Z" fill="none" stroke="#ffffff" stroke-width="1.500"/><circle cx="9.4" cy="4.9" r="3.96" fill="#ffffff"/><circle cx="8.0" cy="3.7" r="1.500" fill="#1e1e1e"/></g><g transform="translate(45,577.4)"><path d="M0.800 5.5 Q9.0 -4.62 17.2 5.5 Q9.0 15.62 0.800 5.5Z" fill="none" stroke="#ffffff" stroke-width="1.500"/><circle cx="9.4" cy="4.9" r="3.96" fill="#ffffff"/><circle cx="8.0" cy="3.7" r="1.500" fill="#1e1e1e"/></g><g transform="translate(45,601.4)"><path d="M0.800 5.5 Q9.0 -4.62 17.2 5.5 Q9.0 15.62 0.800 5.5Z" fill="none" stroke="#ffffff" stroke-width="1.500"/><circle cx="9.4" cy="4.9" r="3.96" fill="#ffffff"/><circle cx="8.0" cy="3.7" r="1.500" fill="#1e1e1e"/></g><g transform="translate(45,625.4)"><path d="M0.800 5.5 Q9.0 -4.62 17.2 5.5 Q9.0 15.62 0.800 5.5Z" fill="none" stroke="#ffffff" stroke-width="1.500"/><circle cx="9.4" cy="4.9" r="3.96" fill="#ffffff"/><circle cx="8.0" cy="3.7" r="1.500" fill="#1e1e1e"/></g><g transform="translate(45,649.4)"><path d="M0.800 5.5 Q9.0 -4.62 17.2 5.5 Q9.0 15.62 0.800 5.5Z" fill="none" stroke="#ffffff" stroke-width="1.500"/><circle cx="9.4" cy="4.9" r="3.96" fill="#ffffff"/><circle cx="8.0" cy="3.7" r="1.500" fill="#1e1e1e"/></g><g transform="translate(45,673.4)"><path d="M0.800 5.5 Q9.0 -4.62 17.2 5.5 Q9.0 15.62 0.800 5.5Z" fill="none" stroke="#ffffff" stroke-width="1.500"/><circle cx="9.4" cy="4.9" r="3.96" fill="#ffffff"/><circle cx="8.0" cy="3.7" r="1.500" fill="#1e1e1e"/></g><g transform="translate(45,697.4)"><path d="M0.800 5.5 Q9.0 -4.62 17.2 5.5 Q9.0 15.62 0.800 5.5Z" fill="none" stroke="#ffffff" stroke-width="1.500"/><circle cx="9.4" cy="4.9" r="3.96" fill="#ffffff"/><circle cx="8.0" cy="3.7" r="1.500" fill="#1e1e1e"/></g><clipPath id="lclip"><rect x="2" y="716" width="215" height="9.400"/></clipPath><g clip-path="url(#lclip)"><g transform="translate(45,721.4)"><path d="M0.800 5.5 Q9.0 -4.62 17.2 5.5 Q9.0 15.62 0.800 5.5Z" fill="none" stroke="#ffffff" stroke-width="1.500"/><circle cx="9.4" cy="4.9" r="3.96" fill="#ffffff"/><circle cx="8.0" cy="3.7" r="1.500" fill="#1e1e1e"/></g><rect x="69.5" y="719.300" width="15.500" height="15.500" fill="#242424" stroke="#0c0c0c" stroke-width="1"/></g><circle cx="76.800" cy="559" r="3.200" fill="#f4a9b8"/><circle cx="76.800" cy="583" r="3.200" fill="#86c06c" stroke="#4f7a3c" stroke-width="0.500"/><path d="M69.500 607.300 H82.500" stroke="#b5121b" stroke-width="1.200"/><rect x="69.5" y="623.3" width="15.5" height="15.5" fill="#242424" stroke="#0c0c0c" stroke-width="1"/><rect x="69.5" y="647.3" width="15.5" height="15.5" fill="#242424" stroke="#0c0c0c" stroke-width="1"/><rect x="69.5" y="671.3" width="15.5" height="15.5" fill="#242424" stroke="#0c0c0c" stroke-width="1"/><rect x="69.5" y="695.3" width="15.5" height="15.5" fill="#242424" stroke="#0c0c0c" stroke-width="1"/><circle cx="17.400" cy="752" r="4" fill="none" stroke="#a0a0a0" stroke-width="1.300"/><path d="M20.400 755 L24 759" stroke="#a0a0a0" stroke-width="1.500"/><g transform="translate(726,745)"><path d="M5 1 L9 8 M1 3 L12 -1" stroke="#cfcfcf" stroke-width="1.600"/><path d="M3 3 L6 9" stroke="#e8e8e8" stroke-width="2"/><ellipse cx="9.600" cy="11" rx="4.600" ry="3.600" fill="#d8d8d8" stroke="#9a8a8a" stroke-width="0.600" transform="rotate(30 9.600 11)"/><circle cx="9" cy="11" r="1.300" fill="#2a2a2a"/><path d="M10 3 L15 1" stroke="#444" stroke-width="0.700"/></g><path d="M851.300 750.400 h5.600 l-2.800 4.800z" fill="#d0d0d0"/><path d="M878.400 752 v-2.600 a3.700 3.700 0 0 1 7.400 0 v2.600" fill="none" stroke="#8a8a8a" stroke-width="1.800"/><rect x="876" y="752" width="12.200" height="9" rx="1.200" fill="#7c7c7c"/><path d="M1016.1999999999999 751 L1018.8 746.800 L1021.4 751Z M1016.1999999999999 755.200 L1018.8 759.400 L1021.4 755.200Z" fill="#bdbdbd"/><path d="M1159.4 751 L1162 746.800 L1164.6 751Z M1159.4 755.200 L1162 759.400 L1164.6 755.200Z" fill="#bdbdbd"/><path d="M1181.600 753 L1185.600 758.200 L1192.600 747.600" fill="none" stroke="#fff" stroke-width="1.800"/><g transform="translate(1249.6,745.6)"><circle cx="7.400" cy="7.400" r="6.400" fill="#d8d8d8"/><path d="M1 7.400 H13.800 M7.400 1 V13.800 M2.600 3.600 Q7.400 6 12.200 3.600 M2.600 11.200 Q7.400 8.800 12.200 11.200 M7.400 1 Q3 7.400 7.400 13.800 M7.400 1 Q11.800 7.400 7.400 13.800" fill="none" stroke="#3a3a3a" stroke-width="0.700"/><path d="M0 7.400 L2.400 5.600 V9.200Z M14.800 7.400 L12.400 5.600 V9.200Z" fill="#e8e8e8"/></g><path d="M1343 752.400 a7 6.400 0 1 1 11 5.200 l2.800 3.200 l-5 -1.600 a7 6.400 0 0 1 -8.800 -6.800z" fill="#727272"/><circle cx="1346.400" cy="752.600" r="1.100" fill="#fff"/><circle cx="1350" cy="752.600" r="1.100" fill="#fff"/><circle cx="1353.600" cy="752.600" r="1.100" fill="#fff"/><g transform="translate(1117.5,224.2)"><line x1="5.00" y1="3.60" x2="5.00" y2="0.80" stroke="#e0252f" stroke-width="1.5" stroke-linecap="round"/><line x1="6.27" y1="4.13" x2="8.25" y2="2.15" stroke="#e0252f" stroke-width="1.5" stroke-linecap="round"/><line x1="6.80" y1="5.40" x2="9.60" y2="5.40" stroke="#e0252f" stroke-width="1.5" stroke-linecap="round"/><line x1="6.27" y1="6.67" x2="8.25" y2="8.65" stroke="#e0252f" stroke-width="1.5" stroke-linecap="round"/><line x1="5.00" y1="7.20" x2="5.00" y2="10.00" stroke="#e0252f" stroke-width="1.5" stroke-linecap="round"/><line x1="3.73" y1="6.67" x2="1.75" y2="8.65" stroke="#e0252f" stroke-width="1.5" stroke-linecap="round"/><line x1="3.20" y1="5.40" x2="0.40" y2="5.40" stroke="#e0252f" stroke-width="1.5" stroke-linecap="round"/><line x1="3.73" y1="4.13" x2="1.75" y2="2.15" stroke="#e0252f" stroke-width="1.5" stroke-linecap="round"/><circle cx="5" cy="5.4" r="1.8" fill="none" stroke="#e0252f" stroke-width="1.6"/><line x1="11.60" y1="7.20" x2="11.60" y2="5.20" stroke="#9a9a9a" stroke-width="1.1" stroke-linecap="round"/><line x1="12.59" y1="7.61" x2="14.00" y2="6.20" stroke="#9a9a9a" stroke-width="1.1" stroke-linecap="round"/><line x1="13.00" y1="8.60" x2="15.00" y2="8.60" stroke="#9a9a9a" stroke-width="1.1" stroke-linecap="round"/><line x1="12.59" y1="9.59" x2="14.00" y2="11.00" stroke="#9a9a9a" stroke-width="1.1" stroke-linecap="round"/><line x1="11.60" y1="10.00" x2="11.60" y2="12.00" stroke="#9a9a9a" stroke-width="1.1" stroke-linecap="round"/><line x1="10.61" y1="9.59" x2="9.20" y2="11.00" stroke="#9a9a9a" stroke-width="1.1" stroke-linecap="round"/><line x1="10.20" y1="8.60" x2="8.20" y2="8.60" stroke="#9a9a9a" stroke-width="1.1" stroke-linecap="round"/><line x1="10.61" y1="7.61" x2="9.20" y2="6.20" stroke="#9a9a9a" stroke-width="1.1" stroke-linecap="round"/><circle cx="11.6" cy="8.6" r="1.4" fill="none" stroke="#9a9a9a" stroke-width="1.2"/><line x1="7.40" y1="12.00" x2="7.40" y2="10.40" stroke="#5b8fd2" stroke-width="0.9" stroke-linecap="round"/><line x1="8.11" y1="12.29" x2="9.24" y2="11.16" stroke="#5b8fd2" stroke-width="0.9" stroke-linecap="round"/><line x1="8.40" y1="13.00" x2="10.00" y2="13.00" stroke="#5b8fd2" stroke-width="0.9" stroke-linecap="round"/><line x1="8.11" y1="13.71" x2="9.24" y2="14.84" stroke="#5b8fd2" stroke-width="0.9" stroke-linecap="round"/><line x1="7.40" y1="14.00" x2="7.40" y2="15.60" stroke="#5b8fd2" stroke-width="0.9" stroke-linecap="round"/><line x1="6.69" y1="13.71" x2="5.56" y2="14.84" stroke="#5b8fd2" stroke-width="0.9" stroke-linecap="round"/><line x1="6.40" y1="13.00" x2="4.80" y2="13.00" stroke="#5b8fd2" stroke-width="0.9" stroke-linecap="round"/><line x1="6.69" y1="12.29" x2="5.56" y2="11.16" stroke="#5b8fd2" stroke-width="0.9" stroke-linecap="round"/><circle cx="7.4" cy="13" r="1" fill="none" stroke="#5b8fd2" stroke-width="1"/><path d="M11 11.600 h4.600 l-1.400 2.400 v0.800 h-1.800 v-0.800z" fill="#b0b0b0"/></g><g transform="translate(1144.0,224.2)"><g transform="scale(0.62) translate(0.600,0.600)"><path d="M11.600 1.400 c-4.400 0 -5 1.600 -5 3.400 v2.600 h5.400 v1 h-7.600 c-2.400 0 -3.400 2 -3.400 5 c0 3 1 4.800 3.200 4.800 h2 v-3 c0 -2 1.400 -3.400 3.400 -3.400 h5 c1.600 0 2.600 -1 2.600 -2.600 v-4.400 c0 -2.200 -2 -3.400 -5.600 -3.400z" fill="#3f7fbf"/><circle cx="8.800" cy="4.200" r="1" fill="#fff"/><path d="M12.400 22.600 c4.400 0 5 -1.600 5 -3.400 v-2.600 h-5.400 v-1 h7.600 c2.400 0 3.400 -2 3.400 -5 c0 -3 -1 -4.800 -3.200 -4.800 h-2 v3 c0 2 -1.400 3.400 -3.400 3.400 h-5 c-1.600 0 -2.600 1 -2.600 2.600 v4.400 c0 2.200 2 3.400 5.600 3.400z" fill="#f6c63c"/><circle cx="15.200" cy="19.800" r="1" fill="#fff"/></g><path d="M11.600 10.600 h4.400 l-1.400 2.400 v0.800 h-1.600 v-0.800z" fill="#b0b0b0"/></g><g transform="translate(1169.0,224.2)"><circle cx="8" cy="8" r="7" fill="#f0f0f0" stroke="#cfcfcf" stroke-width="0.600"/><path d="M8 3 V8.400 L11.400 11" fill="none" stroke="#555" stroke-width="1.200"/></g><g transform="translate(1195.0,224.2)"><path d="M3 1 H10 L13.400 4.400 V15 H3Z" fill="#f2f2f2" stroke="#cfcfcf" stroke-width="0.500"/><path d="M10 1 V4.400 H13.400Z" fill="#bdbdbd"/><path d="M5 7 h6.400 M5 9 h6.400 M5 11 h6.400 M5 13 h6.400" stroke="#777" stroke-width="0.700"/></g><rect x="1217.700" y="227.2" width="1.200" height="10" fill="#4a4a4a"/><rect x="1249.400" y="227.2" width="1.200" height="10" fill="#4a4a4a"/><g transform="translate(1226.0,224.2)"><rect x="1" y="1.400" width="10.600" height="10.400" fill="#f4d935" stroke="#c4a713" stroke-width="0.600"/><path d="M13.400 3 L15.400 4 L10.400 14 L8.400 13Z" fill="#e8c84a" stroke="#7a6a20" stroke-width="0.500"/><path d="M8.400 13 L10.400 14 L8 16Z" fill="#ddd"/></g><g transform="translate(1257.0,224.2)"><path d="M3.400 0.800 a3.600 3.600 0 1 0 3.800 5 l-2.200 0.200 l-1.600 -1.800 l0.800 -2.400z" fill="#f2f2f2" stroke="#888" stroke-width="0.500"/><path d="M5.400 5.800 L7.400 4.200 L15 12.600 L13.200 14.400Z" fill="#f0f0f0" stroke="#888" stroke-width="0.500"/><path d="M9.400 8.600 L11 7 L15 12.600 L13.200 14.400Z" fill="#e8c84a" stroke="#7a6a20" stroke-width="0.400"/></g><circle cx="1123.800" cy="258.600" r="3.600" fill="none" stroke="#a8a8a8" stroke-width="1.200"/><path d="M1126.400 261.400 L1130 265.400" stroke="#a8a8a8" stroke-width="1.400"/><path d="M1344.600 259.600 L1348 256 H1357 V263.200 H1348Z" fill="#d8d8d8"/><path d="M1350.400 257.600 l4 4 m0 -4 l-4 4" stroke="#333" stroke-width="1.100"/><g transform="translate(1135.0,273.6)"><circle cx="8" cy="8" r="7" fill="#f0f0f0" stroke="#cfcfcf" stroke-width="0.600"/><path d="M8 3 V8.400 L11.400 11" fill="none" stroke="#555" stroke-width="1.200"/></g><g transform="translate(1135.0,291.6)"><circle cx="7.400" cy="7.400" r="5" fill="none" stroke="#7fb03a" stroke-width="3.200"/><path d="M7.600 7.600 L14.400 14.400" stroke="#5e9a2c" stroke-width="3" stroke-linecap="round"/><path d="M6.400 6.400 L9.600 9.600" stroke="#f39a2c" stroke-width="2" stroke-linecap="round"/></g><g transform="translate(1135.0,309.6)"><line x1="8.00" y1="5.10" x2="8.00" y2="1.50" stroke="#7ba7e2" stroke-width="2.0" stroke-linecap="round"/><line x1="10.05" y1="5.95" x2="12.60" y2="3.40" stroke="#7ba7e2" stroke-width="2.0" stroke-linecap="round"/><line x1="10.90" y1="8.00" x2="14.50" y2="8.00" stroke="#7ba7e2" stroke-width="2.0" stroke-linecap="round"/><line x1="10.05" y1="10.05" x2="12.60" y2="12.60" stroke="#7ba7e2" stroke-width="2.0" stroke-linecap="round"/><line x1="8.00" y1="10.90" x2="8.00" y2="14.50" stroke="#7ba7e2" stroke-width="2.0" stroke-linecap="round"/><line x1="5.95" y1="10.05" x2="3.40" y2="12.60" stroke="#7ba7e2" stroke-width="2.0" stroke-linecap="round"/><line x1="5.10" y1="8.00" x2="1.50" y2="8.00" stroke="#7ba7e2" stroke-width="2.0" stroke-linecap="round"/><line x1="5.95" y1="5.95" x2="3.40" y2="3.40" stroke="#7ba7e2" stroke-width="2.0" stroke-linecap="round"/><circle cx="8" cy="8" r="2.9" fill="none" stroke="#7ba7e2" stroke-width="2.0"/></g><g transform="translate(1155.0,327.6)"><line x1="8.00" y1="5.10" x2="8.00" y2="1.50" stroke="#8fb6ea" stroke-width="2.0" stroke-linecap="round"/><line x1="10.05" y1="5.95" x2="12.60" y2="3.40" stroke="#8fb6ea" stroke-width="2.0" stroke-linecap="round"/><line x1="10.90" y1="8.00" x2="14.50" y2="8.00" stroke="#8fb6ea" stroke-width="2.0" stroke-linecap="round"/><line x1="10.05" y1="10.05" x2="12.60" y2="12.60" stroke="#8fb6ea" stroke-width="2.0" stroke-linecap="round"/><line x1="8.00" y1="10.90" x2="8.00" y2="14.50" stroke="#8fb6ea" stroke-width="2.0" stroke-linecap="round"/><line x1="5.95" y1="10.05" x2="3.40" y2="12.60" stroke="#8fb6ea" stroke-width="2.0" stroke-linecap="round"/><line x1="5.10" y1="8.00" x2="1.50" y2="8.00" stroke="#8fb6ea" stroke-width="2.0" stroke-linecap="round"/><line x1="5.95" y1="5.95" x2="3.40" y2="3.40" stroke="#8fb6ea" stroke-width="2.0" stroke-linecap="round"/><circle cx="8" cy="8" r="2.9" fill="none" stroke="#8fb6ea" stroke-width="2.0"/></g><g transform="translate(1135.0,345.6)"><circle cx="8" cy="8" r="7.400" fill="#1d5f9f"/><path d="M2 6 Q8 1.600 14 5 M1.600 9.600 Q8 4.600 14.600 8.600 Q9 9 5 14 M14 11 Q10 11.600 8 15" fill="none" stroke="#fff" stroke-width="1.200"/></g><path d="M1119.8 278.6 L1124.6 281.6 L1119.8 284.6Z" fill="#5e5e5e"/><path d="M1119.8 296.6 L1124.6 299.6 L1119.8 302.6Z" fill="#5e5e5e"/><path d="M1119.8 350.6 L1124.6 353.6 L1119.8 356.6Z" fill="#5e5e5e"/><path d="M1118.8 315.20000000000005 H1125.2 L1122 320.6Z" fill="#5e5e5e"/></svg>
</body></html>
